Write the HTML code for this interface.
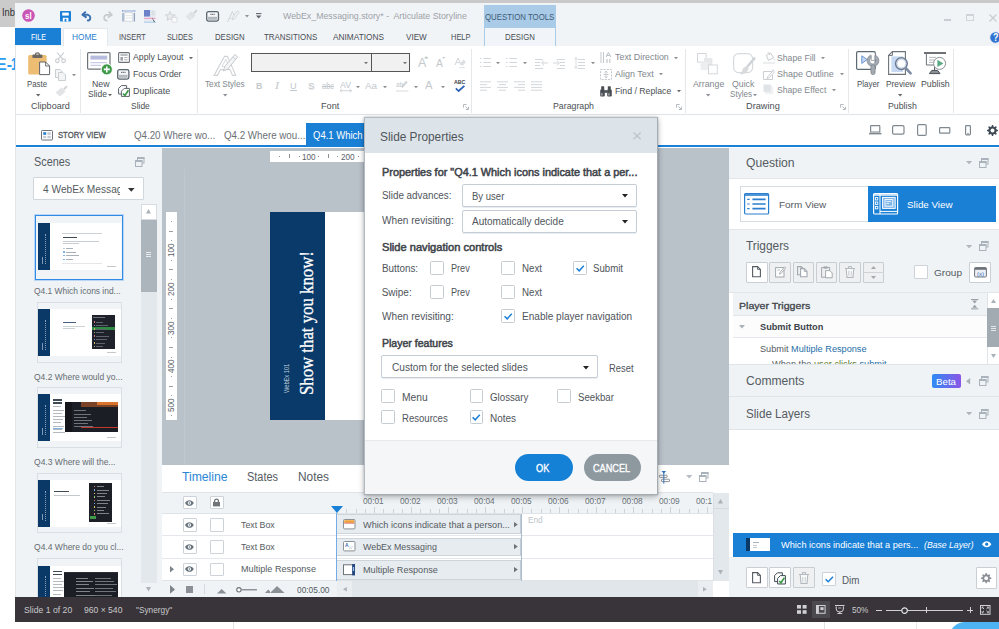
<!DOCTYPE html>
<html><head><meta charset="utf-8"><title>Articulate Storyline</title>
<style>
*{box-sizing:border-box;margin:0;padding:0}
html,body{width:999px;height:629px;overflow:hidden;background:#fff}
body{position:relative;font-family:"Liberation Sans","DejaVu Sans",sans-serif;font-size:10px;color:#4a4f54}
.a{position:absolute}
.t{position:absolute;white-space:nowrap;line-height:1;transform-origin:0 0}
svg{position:absolute;overflow:visible}
</style></head><body>
<!-- backdrop -->
<div class="a" style="left:0px;top:0px;width:999px;height:3px;background:#c9c9c9;"></div>
<div class="a" style="left:0px;top:0px;width:16px;height:27px;background:#cbcbcb;"></div>
<span class="t" style="left:1.50px;top:7.00px;font-size:10.5px;color:#333;transform:scaleX(0.890);">Inb</span>
<span class="t" style="left:-4.00px;top:56.00px;font-size:16.5px;color:#2a9df0;font-weight:bold;transform:scaleX(0.970);">E-</span>
<span class="t" style="left:10.90px;top:56.00px;font-size:16.5px;color:#2a9df0;font-weight:bold;transform:scaleX(0.718);">1</span>
<div class="a" style="left:233px;top:620px;width:1px;height:9px;background:#e3e3e3;"></div>
<div class="a" style="left:824px;top:620px;width:1px;height:9px;background:#e3e3e3;"></div>
<div class="a" style="left:916px;top:620px;width:1px;height:9px;background:#e9e9e9;"></div>
<div class="a" style="left:948.5px;top:621.6px;width:60px;height:20px;background:#4db3f2;border-radius:16px 0 0 0;"></div>
<!-- window -->
<div class="a" style="left:15px;top:3px;width:984px;height:618px;background:#fff;border-left:1px solid #e3e6e9;"></div>
<div class="a" style="left:15px;top:3px;width:984px;height:43px;background:#f1f4f7;"></div>
<svg style="left:22px;top:9.3px;" width="13" height="13" viewBox="0 0 13 13"><circle cx="6.5" cy="6.5" r="6.3" fill="#c955b5"/></svg>
<span class="t" style="left:25.40px;top:12.00px;font-size:9px;color:#fff;font-weight:bold;transform:scaleX(0.878);">sl</span>
<svg style="left:60.2px;top:10.6px;" width="11" height="10.6" viewBox="0 0 11 10.6"><rect x="0" y="0" width="11" height="10.6" rx=".8" fill="#1a80d8"/><rect x="2.2" y="1.6" width="6.6" height="3" fill="#fff"/><rect x="2.8" y="6.8" width="5.6" height="3.8" fill="#fff"/><rect x="4.6" y="7.8" width="1.8" height="2.8" fill="#1a80d8"/></svg>
<svg style="left:81px;top:10.6px;" width="11.4" height="10" viewBox="0 0 11.4 10"><path d="M4.8 0.6L1.4 3.8L5.6 6.6" fill="none" stroke="#3a6fb0" stroke-width="1.9" stroke-linejoin="round"/><path d="M1.8 3.8H7A3.1 3.1 0 0 1 7.6 9.6L6 9.4" fill="none" stroke="#3a6fb0" stroke-width="1.9"/></svg>
<svg style="left:101.8px;top:10.6px;" width="11.4" height="10" viewBox="0 0 11.4 10"><path d="M6.6 0.6L10 3.8L5.8 6.6" fill="none" stroke="#c6cacd" stroke-width="1.7" stroke-linejoin="round"/><path d="M9.6 3.8H4.4A3.1 3.1 0 0 0 3.8 9.6L5.4 9.4" fill="none" stroke="#c6cacd" stroke-width="1.7"/></svg>
<svg style="left:121.5px;top:10px;" width="13.4" height="12" viewBox="0 0 13.4 12"><path d="M0.4 1H13" stroke="#8fa8d6" stroke-width="1"/><path d="M.5 0V2M12.9 0V2" stroke="#8fa8d6" stroke-width=".8"/><rect x="2.6" y="2.8" width="8.2" height="8.4" fill="#fff" stroke="#cfd5db" stroke-width=".9"/><path d="M3.4 5.6H10M3.4 8H10" stroke="#dde2e7" stroke-width=".9"/><path d="M1 3V11.4M12.4 3V11.4" stroke="#8ea2c0" stroke-width="1.3"/></svg>
<svg style="left:144px;top:9.8px;" width="12" height="13" viewBox="0 0 12 13"><rect x="0" y="0" width="6.2" height="6.6" fill="#6b82c8"/><rect x="6.2" y="0" width="5.4" height="6.6" fill="#e6ebf1"/><path d="M6.2 2.2H11.6M6.2 4.4H11.6M9 0V6.6" stroke="#cfd6de" stroke-width=".6"/><path d="M0 8.4H11.6" stroke="#eaa6c9" stroke-width="1.4"/><path d="M0 10.4H8" stroke="#dbe2ea" stroke-width=".8"/><path d="M0 12.2H11.6" stroke="#b7d2ea" stroke-width="1.4"/><path d="M7.6 7L10.4 11L11.4 12.6L9.6 11.6Z" fill="#3e4a54"/></svg>
<svg style="left:164.5px;top:10.6px;" width="12.4" height="11.6" viewBox="0 0 12.4 11.6"><path d="M5 0.5L6.3 3.7L9.6 4L7.1 6.1L7.9 9.4L5 7.6L2.1 9.4L2.9 6.1L0.4 4L3.7 3.7Z" fill="#e9ebed" stroke="#c9cdd1" stroke-width=".9"/><rect x="7" y="6.6" width="5" height="4.6" rx=".6" fill="#fbfbfc" stroke="#d3d7da" stroke-width=".8"/><path d="M8.2 6.6V5.4A1.3 1.3 0 0 1 10.8 5.4V6.6" fill="none" stroke="#d3d7da" stroke-width=".8"/></svg>
<svg style="left:185.3px;top:10.4px;" width="12.6" height="11" viewBox="0 0 12.6 11"><path d="M11.4 0.8L9.2 3" stroke="#d0d4d8" stroke-width="2" stroke-linecap="round"/><path d="M6.4 1.6L10.6 5.4L5 10.6L0.6 6.4Z" fill="#dfe2e5"/><path d="M3 4.6L7.4 8.6" stroke="#eef0f2" stroke-width=".8"/></svg>
<svg style="left:205.8px;top:10.7px;" width="13.2" height="10.8" viewBox="0 0 13.2 10.8"><rect x=".7" y=".7" width="11.8" height="9.4" rx="1.8" fill="#f4f6f7" stroke="#5a666e" stroke-width="1.3"/><rect x="2" y="5.8" width="9.2" height="3" fill="#b4babf"/><path d="M4.4 3.4H8.8" stroke="#6d7379" stroke-width="1.2" stroke-dasharray="1.2 .5"/></svg>
<svg style="left:226.7px;top:9.8px;" width="12.4" height="12.4" viewBox="0 0 12.4 12.4"><path d="M0.5 12L5.4 1.5L8.4 8.4" fill="none" stroke="#cfd3d7" stroke-width="1"/><path d="M2.6 8.4H7" stroke="#d5d9dc" stroke-width=".9"/><path d="M10.6 0.6L5.8 7.2L5.2 10L7.6 8.6L12.2 2.4Z" fill="#f1f3f5" stroke="#cfd3d7" stroke-width=".9"/></svg>
<svg style="left:245.3px;top:15.2px;" width="4" height="2.4" viewBox="0 0 4 2.4"><path d="M0 0H4L2.0 2.4Z" fill="#8a9096"/></svg>
<svg style="left:256.2px;top:13.2px;" width="5.4" height="5.6" viewBox="0 0 5.4 5.6"><path d="M0 .6H5.4" stroke="#5f656b" stroke-width="1.1"/><path d="M0 2.6H5.4L2.7 5.4Z" fill="#5f656b"/></svg>
<span class="t" style="left:282.50px;top:11.00px;font-size:9.8px;color:#9da2a7;transform:scaleX(0.899);">WebEx_Messaging.story* -&nbsp; Articulate Storyline</span>
<div class="a" style="left:944px;top:19px;width:7px;height:1.5px;background:#c9cdd1;"></div>
<div class="a" style="left:966px;top:13.5px;width:8px;height:7.5px;border:1px solid #d0d4d8;border-top-width:2px;"></div>
<svg style="left:989px;top:13.5px;" width="8" height="8" viewBox="0 0 8 8"><path d="M0.5 0.5L7.5 7.5M7.5 0.5L0.5 7.5" stroke="#c9cdd1" stroke-width="1.3"/></svg>
<svg style="left:989px;top:30.5px;" width="13" height="13" viewBox="0 0 13 13"><circle cx="6.5" cy="6.5" r="6.3" fill="#dfe8f5"/><circle cx="6.5" cy="6.5" r="5.2" fill="#2f72cf"/></svg>
<span class="t" style="left:993.20px;top:33.00px;font-size:10px;color:#fff;font-weight:bold;transform:scaleX(0.900);">?</span>
<div class="a" style="left:15px;top:28.2px;width:45.9px;height:17.2px;background:#1a80d6;"></div>
<span class="t" style="left:30.50px;top:33.00px;font-size:9.2px;color:#fff;transform:scaleX(0.773);">FILE</span>
<div class="a" style="left:63px;top:28px;width:44.5px;height:18px;background:#fff;border:1px solid #e3e8ec;border-bottom:none;"></div>
<span class="t" style="left:72.30px;top:33.00px;font-size:9.2px;color:#2a7fd0;transform:scaleX(0.900);">HOME</span>
<span class="t" style="left:118.50px;top:33.00px;font-size:9.2px;color:#4a4f54;transform:scaleX(0.799);">INSERT</span>
<span class="t" style="left:166.50px;top:33.00px;font-size:9.2px;color:#4a4f54;transform:scaleX(0.789);">SLIDES</span>
<span class="t" style="left:215.30px;top:33.00px;font-size:9.2px;color:#4a4f54;transform:scaleX(0.843);">DESIGN</span>
<span class="t" style="left:263.80px;top:33.00px;font-size:9.2px;color:#4a4f54;transform:scaleX(0.861);">TRANSITIONS</span>
<span class="t" style="left:333.30px;top:33.00px;font-size:9.2px;color:#4a4f54;transform:scaleX(0.903);">ANIMATIONS</span>
<span class="t" style="left:405.50px;top:33.00px;font-size:9.2px;color:#4a4f54;transform:scaleX(0.886);">VIEW</span>
<span class="t" style="left:450.50px;top:33.00px;font-size:9.2px;color:#4a4f54;transform:scaleX(0.812);">HELP</span>
<div class="a" style="left:483.75px;top:5px;width:72.5px;height:23px;background:#a9cbe8;"></div>
<span class="t" style="left:485.00px;top:13.00px;font-size:9.2px;color:#3e5a74;transform:scaleX(0.852);">QUESTION TOOLS</span>
<div class="a" style="left:483.75px;top:28px;width:72.5px;height:17.5px;background:#f1f5f9;border:1px solid #a9cbe8;border-top:none;border-bottom:none;"></div>
<span class="t" style="left:504.50px;top:33.00px;font-size:9.2px;color:#4a4f54;transform:scaleX(0.851);">DESIGN</span>
<!-- ribbon -->
<div class="a" style="left:16px;top:46px;width:983px;height:68.5px;background:#fff;border-bottom:1px solid #dfe4e8;"></div>
<div class="a" style="left:80px;top:49px;width:1px;height:63.5px;background:#e4e8eb;"></div>
<div class="a" style="left:196.5px;top:49px;width:1px;height:63.5px;background:#e4e8eb;"></div>
<div class="a" style="left:470.5px;top:49px;width:1px;height:63.5px;background:#e4e8eb;"></div>
<div class="a" style="left:685px;top:49px;width:1px;height:63.5px;background:#e4e8eb;"></div>
<div class="a" style="left:848px;top:49px;width:1px;height:63.5px;background:#e4e8eb;"></div>
<div class="a" style="left:953px;top:49px;width:1px;height:63.5px;background:#e4e8eb;"></div>
<svg style="left:27.8px;top:52px;" width="22" height="23" viewBox="0 0 22 23"><rect x="0.2" y="3" width="18.4" height="19.6" rx="1.5" fill="#ecbd73"/><rect x="4.4" y="2.6" width="10" height="3.4" rx=".8" fill="#6b6762"/><path d="M7.4 3V2.4A2 1.5 0 0 1 11.4 2.4V3" fill="none" stroke="#6b6762" stroke-width="1.2"/><path d="M11.6 10H17.6L21.6 14V22.6H11.6Z" fill="#fff" stroke="#5f656b" stroke-width="1"/><path d="M17.6 10V14H21.6" fill="none" stroke="#5f656b" stroke-width=".9"/></svg>
<span class="t" style="left:26.80px;top:80.00px;font-size:9.3px;color:#4a4f54;transform:scaleX(0.841);">Paste</span>
<svg style="left:35.5px;top:94px;" width="4.4" height="2.4" viewBox="0 0 4.4 2.4"><path d="M0 0H4.4L2.2 2.4Z" fill="#666"/></svg>
<svg style="left:55px;top:52px;" width="11" height="11" viewBox="0 0 11 11"><path d="M2 0.5L8 7.4M9 0.5L3 7.4" stroke="#c5cacf" stroke-width="1.1" fill="none"/><circle cx="2.4" cy="8.8" r="1.8" fill="none" stroke="#c5cacf" stroke-width="1.1"/><circle cx="8.6" cy="8.8" r="1.8" fill="none" stroke="#c5cacf" stroke-width="1.1"/></svg>
<svg style="left:55px;top:69px;" width="12" height="12" viewBox="0 0 12 12"><path d="M0.5 0.5H5L7.5 3V8.5H0.5Z" fill="#f3f4f5" stroke="#c9ced2" stroke-width="1"/><path d="M3.5 3.5H8L10.5 6V11.5H3.5Z" fill="#f3f4f5" stroke="#c9ced2" stroke-width="1"/></svg>
<svg style="left:72px;top:74px;" width="4" height="2.2" viewBox="0 0 4 2.2"><path d="M0 0H4L2.0 2.2Z" fill="#8a9096"/></svg>
<svg style="left:54.6px;top:85.6px;" width="12.6" height="11" viewBox="0 0 12.6 11"><path d="M11.4 0.8L9.2 3" stroke="#d3d7da" stroke-width="2" stroke-linecap="round"/><path d="M6.4 1.6L10.6 5.4L5 10.6L0.6 6.4Z" fill="#e2e5e8"/></svg>
<span class="t" style="left:30.50px;top:102.00px;font-size:9.3px;color:#4a4f54;transform:scaleX(0.975);">Clipboard</span>
<svg style="left:87px;top:52px;" width="24" height="24" viewBox="0 0 24 24"><rect x="0.6" y="0.6" width="22.4" height="16.6" rx="1" fill="#fff" stroke="#6d7379" stroke-width="1.2"/><rect x="3.4" y="3.6" width="16.8" height="4" fill="#b7bcdf"/><path d="M3.4 10.6H20M3.4 13.4H14" stroke="#c7cbe6" stroke-width="1.2"/><circle cx="19.8" cy="17.4" r="5.6" fill="#3f9b4a" stroke="#fff" stroke-width="1"/><path d="M19.8 14.4V20.4M16.8 17.4H22.8" stroke="#fff" stroke-width="1.6"/></svg>
<span class="t" style="left:91.50px;top:80.00px;font-size:9.3px;color:#4a4f54;transform:scaleX(0.940);">New</span>
<span class="t" style="left:88.00px;top:90.00px;font-size:9.3px;color:#4a4f54;transform:scaleX(0.918);">Slide</span>
<svg style="left:108.3px;top:94.3px;" width="4" height="2.2" viewBox="0 0 4 2.2"><path d="M0 0H4L2.0 2.2Z" fill="#666"/></svg>
<svg style="left:117.5px;top:52px;" width="12" height="11" viewBox="0 0 12 11"><rect x=".6" y=".6" width="10.8" height="9.8" rx="1" fill="#fff" stroke="#6d7379" stroke-width="1.1"/><path d="M2.4 3H9.6" stroke="#8d949b" stroke-width="1.2"/><rect x="2.4" y="5" width="2.6" height="3.6" fill="#9aa1a8"/><path d="M6.2 5.6H9.6M6.2 7.8H9.6" stroke="#aab0b6" stroke-width="1"/></svg>
<span class="t" style="left:132.50px;top:53.00px;font-size:9.3px;color:#4a4f54;transform:scaleX(0.939);">Apply Layout</span>
<svg style="left:188.5px;top:56.5px;" width="4" height="2.2" viewBox="0 0 4 2.2"><path d="M0 0H4L2.0 2.2Z" fill="#666"/></svg>
<svg style="left:117.4px;top:68.6px;" width="12.6" height="11" viewBox="0 0 12.6 11"><rect x=".7" y=".7" width="11.2" height="9.4" rx="1.8" fill="#f4f6f7" stroke="#5a666e" stroke-width="1.3"/><rect x="2" y="5.8" width="8.6" height="3" fill="#b4babf"/><path d="M4 3.4H8.6" stroke="#6d7379" stroke-width="1.2" stroke-dasharray="1.2 .5"/></svg>
<span class="t" style="left:132.50px;top:70.00px;font-size:9.3px;color:#4a4f54;transform:scaleX(0.939);">Focus Order</span>
<svg style="left:117.5px;top:85px;" width="12" height="12" viewBox="0 0 12 12"><path d="M0.6 3.4L3.4 0.6H8.6V9H0.6Z" fill="#fff" stroke="#5c6268" stroke-width="1"/><path d="M3.4 6.2L6.2 3.4H11.4V11.4H3.4Z" fill="#fff" stroke="#5c6268" stroke-width="1"/><path d="M5 8.6L7 10.4L10.4 5.2" fill="none" stroke="#3f9b4a" stroke-width="1.8"/></svg>
<span class="t" style="left:132.50px;top:87.00px;font-size:9.3px;color:#4a4f54;transform:scaleX(0.962);">Duplicate</span>
<span class="t" style="left:130.50px;top:102.00px;font-size:9.3px;color:#4a4f54;transform:scaleX(0.909);">Slide</span>
<svg style="left:213px;top:53.6px;" width="25" height="22" viewBox="0 0 25 22"><path d="M1 21.4L11.4 2.4H14.4L22.8 21.4H19.6L17 15.6H7.4L4.4 21.4Z" fill="#fff" stroke="#cdd1d5" stroke-width="1.1" stroke-linejoin="round"/><path d="M9 12.6L12.8 5.2L15.8 12.6Z" fill="#fff" stroke="#d3d7da" stroke-width=".9"/><path d="M22 0.4L11.8 12.4L10.4 17L14.8 15L24.6 3Z" fill="#f3f4f6" stroke="#c6cbcf" stroke-width="1" stroke-linejoin="round"/><path d="M19.8 3L22.4 5.4" stroke="#c6cbcf" stroke-width=".9"/></svg>
<span class="t" style="left:205.00px;top:80.00px;font-size:9.3px;color:#82888e;transform:scaleX(0.879);">Text Styles</span>
<svg style="left:223px;top:94px;" width="4.4" height="2.4" viewBox="0 0 4.4 2.4"><path d="M0 0H4.4L2.2 2.4Z" fill="#8a9096"/></svg>
<div class="a" style="left:250.5px;top:53px;width:121.5px;height:19px;background:#f1f1f1;border:1px solid #555;"></div>
<div class="a" style="left:371px;top:53px;width:38.5px;height:19px;background:#f1f1f1;border:1px solid #555;"></div>
<svg style="left:364px;top:61.5px;" width="4" height="2.2" viewBox="0 0 4 2.2"><path d="M0 0H4L2.0 2.2Z" fill="#777"/></svg>
<svg style="left:402.5px;top:61.5px;" width="4" height="2.2" viewBox="0 0 4 2.2"><path d="M0 0H4L2.0 2.2Z" fill="#777"/></svg>
<span class="t" style="left:418.00px;top:57.00px;font-size:12px;color:#c3c8cc;transform:scaleX(1.035);">A</span>
<svg style="left:424.5px;top:56.6px;" width="3.4" height="1.8" viewBox="0 0 3.4 1.8"><path d="M0 0H3.4L1.7 1.8Z" fill="#c3c8cc"/></svg>
<svg style="left:424.2px;top:56px;" width="4" height="2.4" viewBox="0 0 4 2.4"><path d="M0 2.4L2 0L4 2.4Z" fill="#c3c8cc"/></svg>
<span class="t" style="left:435.50px;top:59.00px;font-size:10.3px;color:#c3c8cc;transform:scaleX(1.018);">A</span>
<svg style="left:441.5px;top:57.2px;" width="3.4" height="1.8" viewBox="0 0 3.4 1.8"><path d="M0 0H3.4L1.7 1.8Z" fill="#c3c8cc"/></svg>
<svg style="left:453.5px;top:56.5px;" width="12" height="11" viewBox="0 0 12 11"><path d="M1 8L4 1L7 8M2.2 5.6H5.8" fill="none" stroke="#d3d7da" stroke-width="1"/><path d="M6 6.4L9.4 2.6L12 5L8.6 9Z" fill="#dde0e3"/><path d="M5 10.5H11" stroke="#e3e6e8" stroke-width="1"/></svg>
<span class="t" style="left:256.00px;top:81.00px;font-size:9.6px;color:#c3c8cc;font-weight:bold;transform:scaleX(0.908);">B</span>
<span class="t" style="left:274.50px;top:81.00px;font-size:9.6px;color:#c3c8cc;font-style:italic;font-family:'Liberation Serif',serif;transform:scaleX(1.249);">I</span>
<span class="t" style="left:290.30px;top:81.00px;font-size:9.6px;color:#c3c8cc;transform:scaleX(0.951);">U</span>
<div class="a" style="left:290px;top:90.3px;width:7.2px;height:1px;background:#c3c8cc;"></div>
<span class="t" style="left:308.00px;top:81.00px;font-size:9.6px;color:#c3c8cc;text-shadow:1px 1px 0 #e2e5e7;transform:scaleX(0.983);">S</span>
<span class="t" style="left:322.00px;top:82.00px;font-size:8.3px;color:#c3c8cc;transform:scaleX(0.896);">abc</span>
<div class="a" style="left:322px;top:86px;width:12px;height:0.8px;background:#c3c8cc;"></div>
<span class="t" style="left:339.80px;top:81.00px;font-size:8.6px;color:#c3c8cc;transform:scaleX(1.016);">AV</span>
<svg style="left:339.5px;top:89.3px;" width="11.5" height="3.4" viewBox="0 0 11.5 3.4"><path d="M0 1.7H11.5M1.8 0L0 1.7L1.8 3.4M9.7 0L11.5 1.7L9.7 3.4" fill="none" stroke="#c3c8cc" stroke-width=".8"/></svg>
<svg style="left:356.3px;top:85.6px;" width="4" height="2.2" viewBox="0 0 4 2.2"><path d="M0 0H4L2.0 2.2Z" fill="#8a9096"/></svg>
<span class="t" style="left:365.00px;top:81.00px;font-size:9.6px;color:#c3c8cc;transform:scaleX(1.021);">Aa</span>
<svg style="left:383px;top:85.6px;" width="4" height="2.2" viewBox="0 0 4 2.2"><path d="M0 0H4L2.0 2.2Z" fill="#8a9096"/></svg>
<svg style="left:395.5px;top:80.5px;" width="12.5" height="11" viewBox="0 0 12.5 11"><path d="M11 0.5L5.6 6.2" stroke="#d0d4d8" stroke-width="2"/><path d="M0 10H12.5" stroke="#e6e8ea" stroke-width="1.6"/></svg>
<span class="t" style="left:395.70px;top:82.00px;font-size:6.6px;color:#c3c8cc;transform:scaleX(0.953);">ab</span>
<svg style="left:413.6px;top:85.6px;" width="4" height="2.2" viewBox="0 0 4 2.2"><path d="M0 0H4L2.0 2.2Z" fill="#8a9096"/></svg>
<span class="t" style="left:425.00px;top:80.00px;font-size:10.6px;color:#c3c8cc;transform:scaleX(1.060);">A</span>
<svg style="left:440.6px;top:85.6px;" width="4" height="2.2" viewBox="0 0 4 2.2"><path d="M0 0H4L2.0 2.2Z" fill="#8a9096"/></svg>
<span class="t" style="left:453.60px;top:80.00px;font-size:5.4px;color:#3d4247;font-weight:bold;transform:scaleX(0.975);">ABC</span>
<svg style="left:455px;top:85px;" width="10" height="7" viewBox="0 0 10 7"><path d="M0.8 3.4L3.6 6L9.4 0.8" fill="none" stroke="#2a62b5" stroke-width="1.7"/></svg>
<span class="t" style="left:320.50px;top:102.00px;font-size:9.3px;color:#4a4f54;transform:scaleX(0.983);">Font</span>
<svg style="left:462.5px;top:104px;" width="6" height="6" viewBox="0 0 6 6"><path d="M.5 3.6V.5H3.6" fill="none" stroke="#b4babf" stroke-width="1"/><path d="M2.4 2.4L5.2 5.2M5.5 2.8V5.5H2.8" fill="none" stroke="#b4babf" stroke-width="1"/></svg>
<svg style="left:479.5px;top:57px;" width="14" height="12" viewBox="0 0 14 12"><path d="M0 1.5H1.4" stroke="#d3d7db" stroke-width="1"/><path d="M3.4 1.5H11" stroke="#d3d7db" stroke-width="1"/><path d="M0 5.5H1.4" stroke="#d3d7db" stroke-width="1"/><path d="M3.4 5.5H11" stroke="#d3d7db" stroke-width="1"/><path d="M0 9.5H1.4" stroke="#d3d7db" stroke-width="1"/><path d="M3.4 9.5H11" stroke="#d3d7db" stroke-width="1"/></svg>
<svg style="left:496.3px;top:61.5px;" width="4" height="2.2" viewBox="0 0 4 2.2"><path d="M0 0H4L2.0 2.2Z" fill="#8a9096"/></svg>
<svg style="left:506px;top:57px;" width="14" height="12" viewBox="0 0 14 12"><path d="M0 1.5H1.4" stroke="#d3d7db" stroke-width="1"/><path d="M3.4 1.5H11" stroke="#d3d7db" stroke-width="1"/><path d="M0 5.5H1.4" stroke="#d3d7db" stroke-width="1"/><path d="M3.4 5.5H11" stroke="#d3d7db" stroke-width="1"/><path d="M0 9.5H1.4" stroke="#d3d7db" stroke-width="1"/><path d="M3.4 9.5H11" stroke="#d3d7db" stroke-width="1"/></svg>
<svg style="left:522.7px;top:61.5px;" width="4" height="2.2" viewBox="0 0 4 2.2"><path d="M0 0H4L2.0 2.2Z" fill="#8a9096"/></svg>
<svg style="left:535px;top:57.5px;" width="14" height="12" viewBox="0 0 14 12"><path d="M0 1.5H8" stroke="#d3d7db" stroke-width="1"/><path d="M0 4.5H5" stroke="#d3d7db" stroke-width="1"/><path d="M0 7.5H5" stroke="#d3d7db" stroke-width="1"/><path d="M0 10.5H8" stroke="#d3d7db" stroke-width="1"/></svg>
<svg style="left:541px;top:60px;" width="7" height="6" viewBox="0 0 7 6"><path d="M7 3H1M3 0.6L0.6 3L3 5.4" fill="none" stroke="#d3d7db" stroke-width="1"/></svg>
<svg style="left:557px;top:57.5px;" width="14" height="12" viewBox="0 0 14 12"><path d="M0 1.5H8" stroke="#d3d7db" stroke-width="1"/><path d="M3 4.5H8" stroke="#d3d7db" stroke-width="1"/><path d="M3 7.5H8" stroke="#d3d7db" stroke-width="1"/><path d="M0 10.5H8" stroke="#d3d7db" stroke-width="1"/></svg>
<svg style="left:552.5px;top:60px;" width="7" height="6" viewBox="0 0 7 6"><path d="M0 3H6M4 0.6L6.4 3L4 5.4" fill="none" stroke="#d3d7db" stroke-width="1"/></svg>
<svg style="left:578px;top:57.5px;" width="14" height="12" viewBox="0 0 14 12"><path d="M0 1.5H7" stroke="#d3d7db" stroke-width="1"/><path d="M0 4.5H7" stroke="#d3d7db" stroke-width="1"/><path d="M0 7.5H7" stroke="#d3d7db" stroke-width="1"/><path d="M0 10.5H7" stroke="#d3d7db" stroke-width="1"/></svg>
<svg style="left:573.5px;top:57px;" width="4" height="12" viewBox="0 0 4 12"><path d="M2 0.6V11.4M0.4 2.4L2 0.6L3.6 2.4M0.4 9.6L2 11.4L3.6 9.6" fill="none" stroke="#d3d7db" stroke-width=".9"/></svg>
<svg style="left:590.6px;top:61.5px;" width="4" height="2.2" viewBox="0 0 4 2.2"><path d="M0 0H4L2.0 2.2Z" fill="#8a9096"/></svg>
<svg style="left:479.5px;top:81px;" width="14" height="12" viewBox="0 0 14 12"><path d="M0 0.8H11" stroke="#d3d7db" stroke-width="1"/><path d="M0 3.6H7" stroke="#d3d7db" stroke-width="1"/><path d="M0 6.4H11" stroke="#d3d7db" stroke-width="1"/><path d="M0 9.2H7" stroke="#d3d7db" stroke-width="1"/></svg>
<svg style="left:496.5px;top:81px;" width="14" height="12" viewBox="0 0 14 12"><path d="M0 0.8H11" stroke="#d3d7db" stroke-width="1"/><path d="M2 3.6H9" stroke="#d3d7db" stroke-width="1"/><path d="M0 6.4H11" stroke="#d3d7db" stroke-width="1"/><path d="M2 9.2H9" stroke="#d3d7db" stroke-width="1"/></svg>
<svg style="left:513.8px;top:81px;" width="14" height="12" viewBox="0 0 14 12"><path d="M0 0.8H11" stroke="#d3d7db" stroke-width="1"/><path d="M4 3.6H11" stroke="#d3d7db" stroke-width="1"/><path d="M0 6.4H11" stroke="#d3d7db" stroke-width="1"/><path d="M4 9.2H11" stroke="#d3d7db" stroke-width="1"/></svg>
<svg style="left:530.8px;top:81px;" width="14" height="12" viewBox="0 0 14 12"><path d="M0 0.8H11" stroke="#d3d7db" stroke-width="1"/><path d="M0 3.6H11" stroke="#d3d7db" stroke-width="1"/><path d="M0 6.4H11" stroke="#d3d7db" stroke-width="1"/><path d="M0 9.2H11" stroke="#d3d7db" stroke-width="1"/></svg>
<svg style="left:600px;top:52px;" width="12" height="11.5" viewBox="0 0 12 11.5"><path d="M1 0V11M3.5 0V11" stroke="#c3c8cc" stroke-width="1"/><path d="M6 5L8.4 0.4L10.8 5M6.8 3.4H10" fill="none" stroke="#b3b8bd" stroke-width=".9"/><path d="M7 7V11M9.8 7V11" stroke="#c3c8cc" stroke-width="1.2"/></svg>
<span class="t" style="left:615.00px;top:53.00px;font-size:9.3px;color:#82888e;transform:scaleX(0.955);">Text Direction</span>
<svg style="left:674.3px;top:56.5px;" width="4" height="2.2" viewBox="0 0 4 2.2"><path d="M0 0H4L2.0 2.2Z" fill="#8a9096"/></svg>
<svg style="left:600px;top:69px;" width="12" height="11" viewBox="0 0 12 11"><rect x=".5" y=".5" width="11" height="10" fill="none" stroke="#c3c8cc" stroke-width="1" stroke-dasharray="2 1.2"/><path d="M6 2V9M4.4 3.6L6 2L7.6 3.6M4.4 7.4L6 9L7.6 7.4M3.4 5.5H8.6" fill="none" stroke="#c3c8cc" stroke-width=".9"/></svg>
<span class="t" style="left:615.00px;top:70.00px;font-size:9.3px;color:#82888e;transform:scaleX(0.967);">Align Text</span>
<svg style="left:659px;top:73.4px;" width="4" height="2.2" viewBox="0 0 4 2.2"><path d="M0 0H4L2.0 2.2Z" fill="#8a9096"/></svg>
<svg style="left:600px;top:85.5px;" width="12" height="11" viewBox="0 0 12 11"><rect x="0.2" y="3.6" width="4.6" height="7" rx="1" fill="#4a4f54"/><rect x="7.2" y="3.6" width="4.6" height="7" rx="1" fill="#4a4f54"/><rect x="1.2" y="0.2" width="3" height="4.2" rx=".6" fill="#4a4f54"/><rect x="7.8" y="0.2" width="3" height="4.2" rx=".6" fill="#4a4f54"/><rect x="4.4" y="4.2" width="3.2" height="2.6" fill="#4a4f54"/><rect x="1.2" y="7.2" width="1.4" height="2.4" fill="#fff" opacity=".55"/><rect x="8.2" y="7.2" width="1.4" height="2.4" fill="#fff" opacity=".55"/></svg>
<span class="t" style="left:615.00px;top:87.00px;font-size:9.3px;color:#4a4f54;transform:scaleX(0.939);">Find / Replace</span>
<svg style="left:677px;top:90.4px;" width="4" height="2.2" viewBox="0 0 4 2.2"><path d="M0 0H4L2.0 2.2Z" fill="#666"/></svg>
<span class="t" style="left:553.30px;top:102.00px;font-size:9.3px;color:#4a4f54;transform:scaleX(0.944);">Paragraph</span>
<svg style="left:676px;top:104px;" width="6" height="6" viewBox="0 0 6 6"><path d="M.5 3.6V.5H3.6" fill="none" stroke="#b4babf" stroke-width="1"/><path d="M2.4 2.4L5.2 5.2M5.5 2.8V5.5H2.8" fill="none" stroke="#b4babf" stroke-width="1"/></svg>
<svg style="left:697px;top:52.5px;" width="21" height="21.5" viewBox="0 0 21 21.5"><rect x=".5" y=".5" width="8.6" height="8.6" fill="#fff" stroke="#d3d7db" stroke-width="1"/><rect x="7" y="5" width="8.4" height="8.4" fill="#e6e8ea"/><rect x="3.6" y="9" width="8" height="8" fill="#eceef0"/><rect x="11.5" y="12" width="8.8" height="8.8" fill="#fff" stroke="#d3d7db" stroke-width="1"/></svg>
<span class="t" style="left:693.00px;top:80.00px;font-size:9.3px;color:#82888e;transform:scaleX(0.946);">Arrange</span>
<svg style="left:706px;top:94px;" width="4.4" height="2.4" viewBox="0 0 4.4 2.4"><path d="M0 0H4.4L2.2 2.4Z" fill="#8a9096"/></svg>
<svg style="left:732.5px;top:52.5px;" width="23" height="23" viewBox="0 0 23 23"><rect x=".6" y=".6" width="19" height="19" rx="5" fill="#fff" stroke="#d8dbde" stroke-width="1.2"/><path d="M22 4.6L14 14" stroke="#cfd3d7" stroke-width="2.4"/><path d="M13.6 13L11 14.6C9 16 9.6 19 7 21.4C11 21.8 14.6 19.6 15.8 15Z" fill="#d8dbde"/></svg>
<span class="t" style="left:732.00px;top:80.00px;font-size:9.3px;color:#82888e;transform:scaleX(0.938);">Quick</span>
<span class="t" style="left:730.00px;top:90.00px;font-size:9.3px;color:#82888e;transform:scaleX(0.869);">Styles</span>
<svg style="left:753.3px;top:94.3px;" width="4" height="2.2" viewBox="0 0 4 2.2"><path d="M0 0H4L2.0 2.2Z" fill="#8a9096"/></svg>
<svg style="left:762.5px;top:52px;" width="12.5" height="12" viewBox="0 0 12.5 12"><path d="M3.4 3.2L7.6 1.2L10.6 5.6L5.4 8.4Z" fill="#fff" stroke="#c6cbcf" stroke-width="1"/><path d="M4.6 0.6C6 0 6.8 1.4 6.4 2.8" fill="none" stroke="#c6cbcf" stroke-width=".9"/><path d="M11 6.2C11.8 7.4 12 8 11.4 8.6C10.8 8.2 10.6 7.2 11 6.2Z" fill="#c6cbcf"/><rect x="0" y="9.8" width="12" height="2.2" fill="#eceef0"/></svg>
<span class="t" style="left:777.00px;top:54.00px;font-size:9.3px;color:#82888e;transform:scaleX(0.931);">Shape Fill</span>
<svg style="left:821px;top:57px;" width="4" height="2.2" viewBox="0 0 4 2.2"><path d="M0 0H4L2.0 2.2Z" fill="#8a9096"/></svg>
<svg style="left:762.5px;top:68.5px;" width="12.5" height="11" viewBox="0 0 12.5 11"><path d="M0.5 2.5H8.5L11 0.6" fill="none" stroke="#c6cbcf" stroke-width=".9"/><path d="M0.5 2.5V10.5H9.5V6" fill="none" stroke="#c6cbcf" stroke-width=".9"/><path d="M10.2 1.6L4.8 7.6L4 9.6L6 8.8L11.6 2.8Z" fill="#fff" stroke="#c6cbcf" stroke-width=".9"/></svg>
<span class="t" style="left:777.00px;top:70.00px;font-size:9.3px;color:#82888e;transform:scaleX(0.964);">Shape Outline</span>
<svg style="left:840px;top:73px;" width="4" height="2.2" viewBox="0 0 4 2.2"><path d="M0 0H4L2.0 2.2Z" fill="#8a9096"/></svg>
<svg style="left:762.5px;top:83.5px;" width="12.5" height="11" viewBox="0 0 12.5 11"><rect x="2.2" y="2.2" width="8" height="8" fill="#f0f1f3"/><rect x="0.5" y="0.5" width="7.4" height="7.4" fill="#e1e4e7"/></svg>
<span class="t" style="left:777.00px;top:86.00px;font-size:9.3px;color:#82888e;transform:scaleX(0.929);">Shape Effect</span>
<svg style="left:831.8px;top:89px;" width="4" height="2.2" viewBox="0 0 4 2.2"><path d="M0 0H4L2.0 2.2Z" fill="#8a9096"/></svg>
<span class="t" style="left:745.50px;top:102.00px;font-size:9.3px;color:#4a4f54;transform:scaleX(0.991);">Drawing</span>
<svg style="left:839.5px;top:104px;" width="6" height="6" viewBox="0 0 6 6"><path d="M.5 3.6V.5H3.6" fill="none" stroke="#b4babf" stroke-width="1"/><path d="M2.4 2.4L5.2 5.2M5.5 2.8V5.5H2.8" fill="none" stroke="#b4babf" stroke-width="1"/></svg>
<svg style="left:856.3px;top:51px;" width="24" height="24" viewBox="0 0 24 24"><rect x=".6" y=".6" width="18.6" height="17.8" rx="1.2" fill="#fff" stroke="#5e6a72" stroke-width="1.2"/><path d="M5.8 4.8V12.4L11.2 8.6Z" fill="#c5d8f2" stroke="#6a93d0" stroke-width="1"/><circle cx="17" cy="9.6" r="4.4" fill="none" stroke="#a3aab1" stroke-width="3"/><circle cx="17" cy="9.6" r="5.9" fill="none" stroke="#7a838b" stroke-width=".7"/><rect x="15.2" y="2.4" width="3.6" height="7.6" fill="#fff"/><path d="M15.2 4.4V9.4H18.8V4.4" fill="none" stroke="#7a838b" stroke-width=".7"/><rect x="14.9" y="13.6" width="4.2" height="10" rx="2" fill="#a3aab1" stroke="#7a838b" stroke-width=".7"/></svg>
<span class="t" style="left:857.00px;top:80.00px;font-size:9.3px;color:#4a4f54;transform:scaleX(0.854);">Player</span>
<svg style="left:887.5px;top:51px;" width="24.5" height="24.5" viewBox="0 0 24.5 24.5"><path d="M0.6 4.4L4.4 0.6H17.4V23.4H0.6Z" fill="#fff" stroke="#6d7379" stroke-width="1.1"/><path d="M4.4 0.6V4.4H0.6" fill="none" stroke="#6d7379" stroke-width="1"/><rect x="3.4" y="5.4" width="11.6" height="15.6" fill="#c7d9f3"/><circle cx="13.4" cy="12.6" r="5.8" fill="#fff" stroke="#6a7b92" stroke-width="1.6"/><circle cx="13.4" cy="12.6" r="4.4" fill="none" stroke="#c0cde0" stroke-width="1"/><path d="M17.8 17.2L22.6 22.4" stroke="#7d8ca2" stroke-width="2.6" stroke-linecap="round"/></svg>
<span class="t" style="left:885.50px;top:80.00px;font-size:9.3px;color:#4a4f54;transform:scaleX(0.892);">Preview</span>
<svg style="left:897.8px;top:94px;" width="4.4" height="2.4" viewBox="0 0 4.4 2.4"><path d="M0 0H4.4L2.2 2.4Z" fill="#666"/></svg>
<svg style="left:924px;top:52px;" width="23" height="23" viewBox="0 0 23 23"><path d="M0 1H22" stroke="#4a4f54" stroke-width="1.6"/><path d="M2.4 2V13H13" fill="none" stroke="#6d7379" stroke-width="1"/><path d="M5 5.4H12M5 8H10.6M5 10.4H9" stroke="#aab0b6" stroke-width=".9"/><path d="M10.6 13V18M5.4 21.6H16L13.6 18.4H7.8Z" fill="#8a9096" stroke="#4a4f54" stroke-width="1"/><circle cx="15.6" cy="11.4" r="6" fill="#fff" stroke="#8a9096" stroke-width="1"/><path d="M13.4 7.8V15L19.4 11.4Z" fill="#5aa886"/></svg>
<span class="t" style="left:920.50px;top:80.00px;font-size:9.3px;color:#4a4f54;transform:scaleX(0.938);">Publish</span>
<span class="t" style="left:887.50px;top:102.00px;font-size:9.3px;color:#4a4f54;transform:scaleX(0.944);">Publish</span>
<!-- doc tabs -->
<svg style="left:40.8px;top:129.5px;" width="12" height="10.5" viewBox="0 0 12 10.5"><rect x=".5" y=".5" width="11" height="9.5" rx=".8" fill="#fff" stroke="#6d7379" stroke-width="1"/><rect x="2.2" y="2.2" width="3" height="2.6" fill="#2a7fd0"/><rect x="6.4" y="2.2" width="3.4" height="2.6" fill="#c5cbd1"/><rect x="2.2" y="5.8" width="3" height="2.4" fill="#c5cbd1"/><rect x="6.4" y="5.8" width="3.4" height="2.4" fill="#c5cbd1"/></svg>
<span class="t" style="left:58.00px;top:131.00px;font-size:8.8px;color:#4f555b;-webkit-text-stroke:.3px #4f555b;transform:scaleX(0.873);">STORY VIEW</span>
<span class="t" style="left:134.30px;top:131.00px;font-size:10.2px;color:#6a7076;transform:scaleX(0.956);">Q4.20 Where wo...</span>
<span class="t" style="left:223.60px;top:131.00px;font-size:10.2px;color:#6a7076;transform:scaleX(0.958);">Q4.2 Where wou...</span>
<div class="a" style="left:305.6px;top:123px;width:70px;height:23px;background:#1a80d6;"></div>
<span class="t" style="left:313.40px;top:131.00px;font-size:10.2px;color:#fff;transform:scaleX(0.932);">Q4.1 Which</span>
<div class="a" style="left:16px;top:145.4px;width:983px;height:2.1px;background:#1a80d6;"></div>
<svg style="left:869px;top:125px;" width="12.5" height="9.6" viewBox="0 0 12.5 9.6"><rect x="1.6" y=".6" width="9.2" height="6.4" rx=".6" fill="#fff" stroke="#7f888f" stroke-width="1.2"/><path d="M0 8.6H12.4" stroke="#7f888f" stroke-width="1.6"/></svg>
<svg style="left:892.2px;top:125px;" width="12.6" height="9.8" viewBox="0 0 12.6 9.8"><rect x=".6" y=".6" width="11.4" height="8.6" rx="1.4" fill="#fff" stroke="#7f888f" stroke-width="1.2"/></svg>
<svg style="left:916.7px;top:124px;" width="9.8" height="12" viewBox="0 0 9.8 12"><rect x=".6" y=".6" width="8.6" height="10.8" rx="1.2" fill="#fff" stroke="#7f888f" stroke-width="1.2"/></svg>
<svg style="left:939px;top:126.5px;" width="11.4" height="6.8" viewBox="0 0 11.4 6.8"><rect x=".6" y=".6" width="10.2" height="5.6" rx=".8" fill="#fff" stroke="#7f888f" stroke-width="1.2"/></svg>
<svg style="left:965px;top:124.7px;" width="6" height="10.4" viewBox="0 0 6 10.4"><rect x=".6" y=".6" width="4.8" height="9.2" rx=".8" fill="#fff" stroke="#7f888f" stroke-width="1.2"/><path d="M2 8.6H4" stroke="#7f888f" stroke-width=".8"/></svg>
<svg style="left:987px;top:125px;" width="11" height="11" viewBox="0 0 11 11"><path d="M10.97 4.96L10.97 6.04L9.29 6.65L8.99 7.37L9.75 8.99L8.99 9.75L7.37 8.99L6.65 9.29L6.04 10.97L4.96 10.97L4.35 9.29L3.63 8.99L2.01 9.75L1.25 8.99L2.01 7.37L1.71 6.65L0.03 6.04L0.03 4.96L1.71 4.35L2.01 3.63L1.25 2.01L2.01 1.25L3.63 2.01L4.35 1.71L4.96 0.03L6.04 0.03L6.65 1.71L7.37 2.01L8.99 1.25L9.75 2.01L8.99 3.63L9.29 4.35Z" fill="#3e4a54"/><circle cx="5.5" cy="5.5" r="1.98" fill="#fff"/></svg>
<!-- scenes panel -->
<div class="a" style="left:16px;top:147.5px;width:146px;height:450px;background:#eff3f6;"></div>
<span class="t" style="left:33.80px;top:156.00px;font-size:12.3px;color:#555b61;transform:scaleX(0.883);">Scenes</span>
<svg style="left:135px;top:157px;" width="10" height="10" viewBox="0 0 10 10"><rect x="2.5" y="1" width="6.5" height="5" fill="none" stroke="#aab3bb" stroke-width="1"/><rect x="2" y="0" width="7.5" height="2" fill="#aab3bb"/><rect x=".5" y="4" width="6.5" height="5.5" fill="#eff3f6" stroke="#aab3bb" stroke-width="1"/><rect x="0" y="3" width="7.5" height="2" fill="#aab3bb"/></svg>
<div class="a" style="left:33.3px;top:177px;width:110.5px;height:23px;background:#fff;border:1px solid #cfd6dc;border-radius:1px;"></div>
<div class="a" style="left:43px;top:180px;width:77px;height:17px;overflow:hidden;"></div>
<div class="a" style="left:43px;top:180px;width:76.6px;height:18px;overflow:hidden">
<span class="t" style="left:0.00px;top:5.00px;font-size:10.4px;color:#555b61;transform:scaleX(0.978);">4 WebEx Messaging</span>
</div>
<svg style="left:128.3px;top:188px;" width="6.6" height="3.8" viewBox="0 0 6.6 3.8"><path d="M0 0H6.6L3.3 3.8Z" fill="#333"/></svg>
<div class="a" style="left:140.8px;top:204px;width:16px;height:380px;background:#e3e8ec;"></div>
<div class="a" style="left:140.8px;top:204px;width:16px;height:16px;background:#fff;border:1px solid #d5dbe0;"></div>
<svg style="left:146px;top:209px;" width="5" height="4.4" viewBox="0 0 5 4.4"><path d="M0 4.4L2.5 0L5 4.4Z" fill="#aab1b8"/></svg>
<div class="a" style="left:140.8px;top:220px;width:16px;height:72px;background:#acb5bc;"></div>
<div class="a" style="left:146.3px;top:251.5px;width:5px;height:1px;background:#e8ecef;"></div>
<div class="a" style="left:146.3px;top:253.7px;width:5px;height:1px;background:#e8ecef;"></div>
<div class="a" style="left:146.3px;top:255.9px;width:5px;height:1px;background:#e8ecef;"></div>
<div class="a" style="left:140.8px;top:583px;width:16px;height:14.5px;background:#eff3f6;"></div>
<svg style="left:146px;top:587px;" width="5" height="4.4" viewBox="0 0 5 4.4"><path d="M0 0H5L2.5 4.4Z" fill="#aab1b8"/></svg>
<div class="a" style="left:16px;top:147.5px;width:125px;height:450px;overflow:hidden"><div class="a" style="left:-16px;top:-147.5px">
<div class="a" style="left:35px;top:215px;width:88px;height:64.6px;background:#f1f4f7;border:1px solid #2f8be6;"></div>
<div class="a" style="left:35px;top:215px;width:88px;height:64.6px;box-shadow:0 0 0 1px #b9d7f5"></div>
<div class="a" style="left:37.5px;top:223.2px;width:83.5px;height:46.6px;background:#fff;"></div>
<div class="a" style="left:37.5px;top:223.2px;width:12.6px;height:46.6px;background:#0a3968;"></div>
<div class="a" style="left:45.4px;top:233.7px;width:2px;height:30px;border-left:1.6px dotted #a9bbd0;opacity:.8"></div>
<div class="a" style="left:41.6px;top:257.2px;width:1px;height:6.4px;background:#7f98b5;"></div>
<div class="a" style="left:107px;top:266.2px;width:9px;height:0.8px;background:#c3c9cf;"></div>
<div class="a" style="left:61.6px;top:232.79999999999998px;width:40px;height:0.8px;background:#cdd2d7;"></div>
<div class="a" style="left:62.5px;top:236.5px;width:14px;height:1.6px;background:#3e4a54;"></div>
<div class="a" style="left:62.5px;top:240.6px;width:36px;height:0.9px;background:#c9ced3;"></div>
<div class="a" style="left:62.5px;top:242.79999999999998px;width:16px;height:0.9px;background:#c9ced3;"></div>
<div class="a" style="left:63.3px;top:247.6px;width:1.5px;height:1.5px;background:#c9ced3;"></div>
<div class="a" style="left:66.4px;top:247.9px;width:7px;height:0.9px;background:#aab0b6;"></div>
<div class="a" style="left:63.3px;top:251.2px;width:1.5px;height:1.5px;background:#7fb2e5;"></div>
<div class="a" style="left:66.4px;top:251.5px;width:10px;height:0.9px;background:#aab0b6;"></div>
<div class="a" style="left:63.3px;top:254.89999999999998px;width:1.5px;height:1.5px;background:#7fb2e5;"></div>
<div class="a" style="left:66.4px;top:255.2px;width:13px;height:0.9px;background:#aab0b6;"></div>
<div class="a" style="left:63.3px;top:258.59999999999997px;width:1.5px;height:1.5px;background:#7fb2e5;"></div>
<div class="a" style="left:66.4px;top:258.9px;width:7px;height:0.9px;background:#aab0b6;"></div>
<div class="a" style="left:61.6px;top:262.8px;width:40px;height:0.6px;background:#e3e7ea;"></div>
<span class="t" style="left:34.40px;top:286.00px;font-size:9.8px;color:#666c72;transform:scaleX(0.860);">Q4.1 Which icons ind...</span>
<div class="a" style="left:37px;top:302.2px;width:84.5px;height:60.5px;background:#f1f4f7;border:1px solid #d9dfe4;"></div>
<div class="a" style="left:37.5px;top:309.4px;width:83.5px;height:46.6px;background:#fff;"></div>
<div class="a" style="left:37.5px;top:309.4px;width:12.6px;height:46.6px;background:#0a3968;"></div>
<div class="a" style="left:45.4px;top:319.9px;width:2px;height:30px;border-left:1.6px dotted #a9bbd0;opacity:.8"></div>
<div class="a" style="left:41.6px;top:343.4px;width:1px;height:6.4px;background:#7f98b5;"></div>
<div class="a" style="left:107px;top:352.4px;width:9px;height:0.8px;background:#c3c9cf;"></div>
<div class="a" style="left:62.5px;top:322.0px;width:13px;height:1.4px;background:#4a5f7a;"></div>
<div class="a" style="left:62.5px;top:325.79999999999995px;width:22px;height:0.9px;background:#cdd2d7;"></div>
<div class="a" style="left:62.5px;top:328.0px;width:12px;height:0.9px;background:#cdd2d7;"></div>
<div class="a" style="left:92px;top:315.0px;width:23px;height:34.4px;background:#1f222a;"></div>
<div class="a" style="left:92px;top:326.79999999999995px;width:23px;height:3px;background:#2f8a43;"></div>
<div class="a" style="left:93.6px;top:321.4px;width:1.4px;height:1.4px;background:#c77;"></div>
<div class="a" style="left:93.6px;top:324.9px;width:1.4px;height:1.4px;background:#79c;"></div>
<div class="a" style="left:93.6px;top:328.4px;width:1.4px;height:1.4px;background:#cb6;"></div>
<div class="a" style="left:93.6px;top:331.9px;width:1.4px;height:1.4px;background:#8b7;"></div>
<div class="a" style="left:93.6px;top:335.4px;width:1.4px;height:1.4px;background:#c77;"></div>
<div class="a" style="left:93.6px;top:338.9px;width:1.4px;height:1.4px;background:#79c;"></div>
<div class="a" style="left:93.6px;top:342.4px;width:1.4px;height:1.4px;background:#cb6;"></div>
<div class="a" style="left:93.6px;top:345.9px;width:1.4px;height:1.4px;background:#8b7;"></div>
<div class="a" style="left:96.4px;top:321.7px;width:7px;height:0.8px;background:#5d646c;"></div>
<div class="a" style="left:96.4px;top:325.2px;width:12px;height:0.8px;background:#5d646c;"></div>
<div class="a" style="left:96.4px;top:328.7px;width:10px;height:0.8px;background:#5d646c;"></div>
<div class="a" style="left:96.4px;top:332.2px;width:8px;height:0.8px;background:#5d646c;"></div>
<div class="a" style="left:96.4px;top:335.7px;width:13px;height:0.8px;background:#5d646c;"></div>
<div class="a" style="left:96.4px;top:339.2px;width:11px;height:0.8px;background:#5d646c;"></div>
<div class="a" style="left:96.4px;top:342.7px;width:9px;height:0.8px;background:#5d646c;"></div>
<div class="a" style="left:96.4px;top:346.2px;width:7px;height:0.8px;background:#5d646c;"></div>
<div class="a" style="left:93px;top:317.0px;width:12px;height:0.8px;background:#6d747c;"></div>
<span class="t" style="left:34.40px;top:372.00px;font-size:9.8px;color:#666c72;transform:scaleX(0.865);">Q4.2 Where would yo...</span>
<div class="a" style="left:37px;top:387.2px;width:84.5px;height:60.5px;background:#f1f4f7;border:1px solid #d9dfe4;"></div>
<div class="a" style="left:37.5px;top:394.4px;width:83.5px;height:46.6px;background:#fff;"></div>
<div class="a" style="left:37.5px;top:394.4px;width:12.6px;height:46.6px;background:#0a3968;"></div>
<div class="a" style="left:45.4px;top:404.9px;width:2px;height:30px;border-left:1.6px dotted #a9bbd0;opacity:.8"></div>
<div class="a" style="left:41.6px;top:428.4px;width:1px;height:6.4px;background:#7f98b5;"></div>
<div class="a" style="left:107px;top:437.4px;width:9px;height:0.8px;background:#c3c9cf;"></div>
<div class="a" style="left:53px;top:399.4px;width:9px;height:1.6px;background:#3e4a54;"></div>
<div class="a" style="left:53px;top:402.4px;width:9px;height:1.4px;background:#3e4a54;"></div>
<div class="a" style="left:53px;top:406.4px;width:8px;height:0.8px;background:#b3b9bf;"></div>
<div class="a" style="left:53px;top:409.59999999999997px;width:11px;height:0.8px;background:#b3b9bf;"></div>
<div class="a" style="left:53px;top:412.79999999999995px;width:9px;height:0.8px;background:#b3b9bf;"></div>
<div class="a" style="left:53px;top:416.0px;width:12px;height:0.8px;background:#b3b9bf;"></div>
<div class="a" style="left:53px;top:419.2px;width:10px;height:0.8px;background:#b3b9bf;"></div>
<div class="a" style="left:53px;top:422.4px;width:8px;height:0.8px;background:#b3b9bf;"></div>
<div class="a" style="left:53px;top:425.59999999999997px;width:11px;height:0.8px;background:#b3b9bf;"></div>
<div class="a" style="left:53px;top:428.79999999999995px;width:9px;height:0.8px;background:#b3b9bf;"></div>
<div class="a" style="left:53px;top:432.0px;width:12px;height:0.8px;background:#b3b9bf;"></div>
<div class="a" style="left:65px;top:402.09999999999997px;width:53px;height:29.7px;background:#1b1e25;"></div>
<div class="a" style="left:81px;top:402.09999999999997px;width:37px;height:5.4px;background:#7a4327;"></div>
<div class="a" style="left:97px;top:402.09999999999997px;width:21px;height:3px;background:#d9742e;"></div>
<div class="a" style="left:65px;top:402.09999999999997px;width:7px;height:29.7px;background:#14161b;"></div>
<div class="a" style="left:74px;top:410.4px;width:12px;height:0.8px;background:#6d747c;"></div>
<div class="a" style="left:74px;top:413.59999999999997px;width:17px;height:0.8px;background:#6d747c;"></div>
<div class="a" style="left:74px;top:416.79999999999995px;width:13px;height:0.8px;background:#6d747c;"></div>
<div class="a" style="left:74px;top:420.0px;width:18px;height:0.8px;background:#6d747c;"></div>
<div class="a" style="left:74px;top:423.2px;width:14px;height:0.8px;background:#6d747c;"></div>
<div class="a" style="left:74px;top:426.4px;width:19px;height:0.8px;background:#6d747c;"></div>
<div class="a" style="left:81px;top:426.9px;width:37px;height:0.9px;background:#c0392b;"></div>
<div class="a" style="left:53px;top:427.9px;width:10px;height:0.8px;background:#7fb2e5;"></div>
<span class="t" style="left:34.40px;top:457.00px;font-size:9.8px;color:#666c72;transform:scaleX(0.870);">Q4.3 Where will the...</span>
<div class="a" style="left:37px;top:472.8px;width:84.5px;height:60.5px;background:#f1f4f7;border:1px solid #d9dfe4;"></div>
<div class="a" style="left:37.5px;top:480.0px;width:83.5px;height:46.6px;background:#fff;"></div>
<div class="a" style="left:37.5px;top:480.0px;width:12.6px;height:46.6px;background:#0a3968;"></div>
<div class="a" style="left:45.4px;top:490.5px;width:2px;height:30px;border-left:1.6px dotted #a9bbd0;opacity:.8"></div>
<div class="a" style="left:41.6px;top:514.0px;width:1px;height:6.4px;background:#7f98b5;"></div>
<div class="a" style="left:107px;top:523.0px;width:9px;height:0.8px;background:#c3c9cf;"></div>
<div class="a" style="left:54px;top:490.5px;width:15px;height:1.6px;background:#3e4a54;"></div>
<div class="a" style="left:54px;top:494.5px;width:26px;height:1px;background:#c3c8cd;"></div>
<div class="a" style="left:89.4px;top:483.0px;width:22.8px;height:38.6px;background:#1c1f26;"></div>
<div class="a" style="left:94px;top:486.0px;width:1.4px;height:1.4px;background:#d77;"></div>
<div class="a" style="left:97px;top:486.2px;width:7px;height:0.8px;background:#7d848c;"></div>
<div class="a" style="left:94px;top:489.4px;width:1.4px;height:1.4px;background:#7ad;"></div>
<div class="a" style="left:97px;top:489.59999999999997px;width:12px;height:0.8px;background:#7d848c;"></div>
<div class="a" style="left:94px;top:492.8px;width:1.4px;height:1.4px;background:#dc6;"></div>
<div class="a" style="left:97px;top:493.0px;width:10px;height:0.8px;background:#7d848c;"></div>
<div class="a" style="left:94px;top:496.2px;width:1.4px;height:1.4px;background:#9c7;"></div>
<div class="a" style="left:97px;top:496.4px;width:8px;height:0.8px;background:#7d848c;"></div>
<div class="a" style="left:94px;top:499.6px;width:1.4px;height:1.4px;background:#d77;"></div>
<div class="a" style="left:97px;top:499.8px;width:13px;height:0.8px;background:#7d848c;"></div>
<div class="a" style="left:94px;top:503.0px;width:1.4px;height:1.4px;background:#7ad;"></div>
<div class="a" style="left:97px;top:503.2px;width:11px;height:0.8px;background:#7d848c;"></div>
<div class="a" style="left:94px;top:506.4px;width:1.4px;height:1.4px;background:#dc6;"></div>
<div class="a" style="left:97px;top:506.59999999999997px;width:9px;height:0.8px;background:#7d848c;"></div>
<div class="a" style="left:94px;top:509.8px;width:1.4px;height:1.4px;background:#9c7;"></div>
<div class="a" style="left:97px;top:510.0px;width:7px;height:0.8px;background:#7d848c;"></div>
<div class="a" style="left:94px;top:513.2px;width:1.4px;height:1.4px;background:#d77;"></div>
<div class="a" style="left:97px;top:513.4px;width:12px;height:0.8px;background:#7d848c;"></div>
<div class="a" style="left:90px;top:516.0px;width:6.4px;height:3.4px;background:#3f9b4a;"></div>
<span class="t" style="left:34.40px;top:542.00px;font-size:9.8px;color:#666c72;transform:scaleX(0.870);">Q4.4 Where do you cl...</span>
<div class="a" style="left:37px;top:558.3px;width:84.5px;height:60.5px;background:#f1f4f7;border:1px solid #d9dfe4;"></div>
<div class="a" style="left:37.5px;top:565.5px;width:83.5px;height:46.6px;background:#fff;"></div>
<div class="a" style="left:37.5px;top:565.5px;width:12.6px;height:46.6px;background:#0a3968;"></div>
<div class="a" style="left:45.4px;top:576.0px;width:2px;height:30px;border-left:1.6px dotted #a9bbd0;opacity:.8"></div>
<div class="a" style="left:41.6px;top:599.5px;width:1px;height:6.4px;background:#7f98b5;"></div>
<div class="a" style="left:107px;top:608.5px;width:9px;height:0.8px;background:#c3c9cf;"></div>
<div class="a" style="left:53px;top:570.5px;width:9px;height:1.6px;background:#3e4a54;"></div>
<div class="a" style="left:53px;top:573.5px;width:9px;height:1.4px;background:#3e4a54;"></div>
<div class="a" style="left:53px;top:577.5px;width:8px;height:0.8px;background:#b3b9bf;"></div>
<div class="a" style="left:53px;top:580.7px;width:11px;height:0.8px;background:#b3b9bf;"></div>
<div class="a" style="left:53px;top:583.9px;width:9px;height:0.8px;background:#b3b9bf;"></div>
<div class="a" style="left:53px;top:587.1px;width:12px;height:0.8px;background:#b3b9bf;"></div>
<div class="a" style="left:53px;top:590.3px;width:10px;height:0.8px;background:#b3b9bf;"></div>
<div class="a" style="left:53px;top:593.5px;width:8px;height:0.8px;background:#b3b9bf;"></div>
<div class="a" style="left:53px;top:596.7px;width:11px;height:0.8px;background:#b3b9bf;"></div>
<div class="a" style="left:53px;top:599.9px;width:9px;height:0.8px;background:#b3b9bf;"></div>
<div class="a" style="left:53px;top:603.1px;width:12px;height:0.8px;background:#b3b9bf;"></div>
<div class="a" style="left:64px;top:571.8px;width:54px;height:32px;background:#1b1e25;"></div>
<div class="a" style="left:64px;top:571.8px;width:54px;height:1.6px;background:#2a2e38;"></div>
<div class="a" style="left:76px;top:577.5px;width:12px;height:0.8px;background:#7d848c;"></div>
<div class="a" style="left:95px;top:577.5px;width:16px;height:0.8px;background:#6d747c;"></div>
<div class="a" style="left:76px;top:580.9px;width:17px;height:0.8px;background:#7d848c;"></div>
<div class="a" style="left:95px;top:580.9px;width:19px;height:0.8px;background:#6d747c;"></div>
<div class="a" style="left:76px;top:584.3px;width:13px;height:0.8px;background:#7d848c;"></div>
<div class="a" style="left:95px;top:584.3px;width:22px;height:0.8px;background:#6d747c;"></div>
<div class="a" style="left:76px;top:587.7px;width:18px;height:0.8px;background:#7d848c;"></div>
<div class="a" style="left:95px;top:587.7px;width:18px;height:0.8px;background:#6d747c;"></div>
<div class="a" style="left:76px;top:591.1px;width:14px;height:0.8px;background:#7d848c;"></div>
<div class="a" style="left:95px;top:591.1px;width:21px;height:0.8px;background:#6d747c;"></div>
<div class="a" style="left:76px;top:594.5px;width:19px;height:0.8px;background:#7d848c;"></div>
<div class="a" style="left:95px;top:594.5px;width:17px;height:0.8px;background:#6d747c;"></div>
<div class="a" style="left:76px;top:597.9px;width:15px;height:0.8px;background:#7d848c;"></div>
<div class="a" style="left:95px;top:597.9px;width:20px;height:0.8px;background:#6d747c;"></div>
<div class="a" style="left:76px;top:601.3px;width:20px;height:0.8px;background:#7d848c;"></div>
<div class="a" style="left:95px;top:601.3px;width:16px;height:0.8px;background:#6d747c;"></div>
</div></div>
<!-- workspace -->
<div class="a" style="left:162px;top:147.5px;width:567.5px;height:317px;background:#b9c1c9;"></div>
<div class="a" style="left:183.6px;top:168.5px;width:1px;height:296px;background:#c0c7ce;"></div>
<div class="a" style="left:270px;top:150.8px;width:387px;height:11.6px;background:#fff;"></div>
<div class="a" style="left:279.20000000000005px;top:155.6px;width:0.9px;height:1.2px;background:#8a9096;"></div>
<div class="a" style="left:298.6px;top:155.6px;width:0.9px;height:1.2px;background:#8a9096;"></div>
<div class="a" style="left:318.0px;top:155.6px;width:0.9px;height:1.2px;background:#8a9096;"></div>
<div class="a" style="left:337.20000000000005px;top:155.6px;width:0.9px;height:1.2px;background:#8a9096;"></div>
<div class="a" style="left:357.6px;top:155.6px;width:0.9px;height:1.2px;background:#8a9096;"></div>
<div class="a" style="left:289.0px;top:154.4px;width:0.9px;height:3.6px;background:#8a9096;"></div>
<div class="a" style="left:327.6px;top:154.4px;width:0.9px;height:3.6px;background:#8a9096;"></div>
<span class="t" style="left:302.00px;top:153.00px;font-size:8.3px;color:#5a6066;transform:scaleX(0.982);">100</span>
<span class="t" style="left:340.60px;top:153.00px;font-size:8.3px;color:#5a6066;transform:scaleX(0.982);">200</span>
<div class="a" style="left:165.9px;top:212px;width:11.2px;height:208px;background:#fff;"></div>
<div class="a" style="left:165.9px;top:212px;width:11.2px;height:208px;overflow:hidden">
<span class="t" style="left:1.2px;top:45.3px;font-size:8.3px;color:#5a6066;transform:rotate(-90deg) scaleX(.98);transform-origin:0 0">100</span>
<div class="a" style="left:4.7px;top:28.400000000000002px;width:1.2px;height:0.9px;background:#9aa0a6;"></div>
<div class="a" style="left:4.7px;top:47.800000000000004px;width:1.2px;height:0.9px;background:#9aa0a6;"></div>
<div class="a" style="left:3.2px;top:18.75px;width:4px;height:0.9px;background:#9aa0a6;"></div>
<span class="t" style="left:1.2px;top:84.0px;font-size:8.3px;color:#5a6066;transform:rotate(-90deg) scaleX(.98);transform-origin:0 0">200</span>
<div class="a" style="left:4.7px;top:67.09999999999998px;width:1.2px;height:0.9px;background:#9aa0a6;"></div>
<div class="a" style="left:4.7px;top:86.49999999999999px;width:1.2px;height:0.9px;background:#9aa0a6;"></div>
<div class="a" style="left:3.2px;top:57.44999999999999px;width:4px;height:0.9px;background:#9aa0a6;"></div>
<span class="t" style="left:1.2px;top:122.7px;font-size:8.3px;color:#5a6066;transform:rotate(-90deg) scaleX(.98);transform-origin:0 0">300</span>
<div class="a" style="left:4.7px;top:105.79999999999997px;width:1.2px;height:0.9px;background:#9aa0a6;"></div>
<div class="a" style="left:4.7px;top:125.19999999999997px;width:1.2px;height:0.9px;background:#9aa0a6;"></div>
<div class="a" style="left:3.2px;top:96.14999999999998px;width:4px;height:0.9px;background:#9aa0a6;"></div>
<span class="t" style="left:1.2px;top:161.4px;font-size:8.3px;color:#5a6066;transform:rotate(-90deg) scaleX(.98);transform-origin:0 0">400</span>
<div class="a" style="left:4.7px;top:144.50000000000003px;width:1.2px;height:0.9px;background:#9aa0a6;"></div>
<div class="a" style="left:4.7px;top:163.9px;width:1.2px;height:0.9px;background:#9aa0a6;"></div>
<div class="a" style="left:3.2px;top:134.85000000000002px;width:4px;height:0.9px;background:#9aa0a6;"></div>
<span class="t" style="left:1.2px;top:200.1px;font-size:8.3px;color:#5a6066;transform:rotate(-90deg) scaleX(.98);transform-origin:0 0">500</span>
<div class="a" style="left:4.7px;top:183.20000000000002px;width:1.2px;height:0.9px;background:#9aa0a6;"></div>
<div class="a" style="left:4.7px;top:202.6px;width:1.2px;height:0.9px;background:#9aa0a6;"></div>
<div class="a" style="left:3.2px;top:173.55px;width:4px;height:0.9px;background:#9aa0a6;"></div>
<div class="a" style="left:4.7px;top:9.400000000000011px;width:1.2px;height:0.9px;background:#9aa0a6;"></div>
</div>
<div class="a" style="left:270px;top:212px;width:387px;height:208px;background:#fff;"></div>
<div class="a" style="left:270px;top:212px;width:55.3px;height:208px;background:#093a69;"></div>
<span class="t" style="left:297px;top:394.5px;font-family:'Liberation Serif',serif;font-size:19px;color:#fff;-webkit-text-stroke:.3px #fff;transform:rotate(-90deg) scaleX(.882);transform-origin:0 0">Show that you know!</span>
<span class="t" style="left:283.6px;top:392.6px;font-size:6.3px;color:#c3d0de;transform:rotate(-90deg) scaleX(.9);transform-origin:0 0">WebEx 101</span>
<!-- timeline -->
<div class="a" style="left:162px;top:464.5px;width:567.5px;height:133px;background:#fff;"></div>
<span class="t" style="left:182.00px;top:471.00px;font-size:12.3px;color:#2a85d8;transform:scaleX(0.989);">Timeline</span>
<span class="t" style="left:247.00px;top:471.00px;font-size:12.3px;color:#555b61;transform:scaleX(0.889);">States</span>
<span class="t" style="left:298.30px;top:471.00px;font-size:12.3px;color:#555b61;transform:scaleX(0.965);">Notes</span>
<div class="a" style="left:162px;top:492px;width:551px;height:21.5px;background:#eff3f6;border-top:1px solid #dfe4e8;border-bottom:1px solid #dfe4e8;"></div>
<div class="a" style="left:162px;top:535px;width:551px;height:1px;background:#e4e8ec;"></div>
<div class="a" style="left:162px;top:558px;width:551px;height:1px;background:#e4e8ec;"></div>
<div class="a" style="left:162px;top:580.3px;width:567.5px;height:1px;background:#dfe4e8;"></div>
<div class="a" style="left:182.5px;top:495.7px;width:14.3px;height:13.6px;background:#fff;border:1px solid #cdd3d8;border-radius:1px;"></div>
<svg style="left:185.2px;top:499.5px;" width="8.8" height="6" viewBox="0 0 8.8 6"><path d="M0 3C2.2 -.8 6.6 -.8 8.8 3C6.6 6.8 2.2 6.8 0 3Z" fill="#65727c"/><circle cx="4.4" cy="3" r="1.7" fill="#fff"/><circle cx="4.4" cy="3" r=".8" fill="#65727c"/></svg>
<div class="a" style="left:209.5px;top:495.7px;width:14.3px;height:13.6px;background:#fff;border:1px solid #cdd3d8;border-radius:1px;"></div>
<svg style="left:213.3px;top:498.6px;" width="7" height="7.4" viewBox="0 0 7 7.4"><rect x="0" y="3" width="7" height="4.4" fill="#6d7379"/><path d="M1.6 3V2A1.9 1.9 0 0 1 5.4 2V3" fill="none" stroke="#6d7379" stroke-width="1.3"/></svg>
<div class="a" style="left:182.5px;top:518px;width:14.3px;height:13.6px;background:#fff;border:1px solid #cdd3d8;border-radius:1px;"></div>
<svg style="left:185.2px;top:521.8000000000001px;" width="8.8" height="6" viewBox="0 0 8.8 6"><path d="M0 3C2.2 -.8 6.6 -.8 8.8 3C6.6 6.8 2.2 6.8 0 3Z" fill="#65727c"/><circle cx="4.4" cy="3" r="1.7" fill="#fff"/><circle cx="4.4" cy="3" r=".8" fill="#65727c"/></svg>
<div class="a" style="left:209.5px;top:518px;width:14.3px;height:13.6px;background:#fff;border:1px solid #cdd3d8;border-radius:1px;"></div>
<span class="t" style="left:240.50px;top:520.00px;font-size:9.8px;color:#555b61;transform:scaleX(0.899);">Text Box</span>
<div class="a" style="left:182.5px;top:540.3px;width:14.3px;height:13.6px;background:#fff;border:1px solid #cdd3d8;border-radius:1px;"></div>
<svg style="left:185.2px;top:544.1px;" width="8.8" height="6" viewBox="0 0 8.8 6"><path d="M0 3C2.2 -.8 6.6 -.8 8.8 3C6.6 6.8 2.2 6.8 0 3Z" fill="#65727c"/><circle cx="4.4" cy="3" r="1.7" fill="#fff"/><circle cx="4.4" cy="3" r=".8" fill="#65727c"/></svg>
<div class="a" style="left:209.5px;top:540.3px;width:14.3px;height:13.6px;background:#fff;border:1px solid #cdd3d8;border-radius:1px;"></div>
<span class="t" style="left:240.50px;top:542.00px;font-size:9.8px;color:#555b61;transform:scaleX(0.899);">Text Box</span>
<div class="a" style="left:182.5px;top:562.6px;width:14.3px;height:13.6px;background:#fff;border:1px solid #cdd3d8;border-radius:1px;"></div>
<svg style="left:185.2px;top:566.4000000000001px;" width="8.8" height="6" viewBox="0 0 8.8 6"><path d="M0 3C2.2 -.8 6.6 -.8 8.8 3C6.6 6.8 2.2 6.8 0 3Z" fill="#65727c"/><circle cx="4.4" cy="3" r="1.7" fill="#fff"/><circle cx="4.4" cy="3" r=".8" fill="#65727c"/></svg>
<div class="a" style="left:209.5px;top:562.6px;width:14.3px;height:13.6px;background:#fff;border:1px solid #cdd3d8;border-radius:1px;"></div>
<span class="t" style="left:240.50px;top:564.00px;font-size:9.8px;color:#555b61;transform:scaleX(0.930);">Multiple Response</span>
<svg style="left:170px;top:566px;" width="4" height="6.6" viewBox="0 0 4 6.6"><path d="M0 0L4 3.3L0 6.6Z" fill="#7d848a"/></svg>
<div class="a" style="left:337.0px;top:507.20000000000005px;width:1px;height:6px;background:#ccd3d9;"></div>
<div class="a" style="left:346.25px;top:509.20000000000005px;width:1px;height:4px;background:#ccd3d9;"></div>
<div class="a" style="left:355.5px;top:509.20000000000005px;width:1px;height:4px;background:#ccd3d9;"></div>
<div class="a" style="left:364.75px;top:509.20000000000005px;width:1px;height:4px;background:#ccd3d9;"></div>
<div class="a" style="left:374.0px;top:507.20000000000005px;width:1px;height:6px;background:#ccd3d9;"></div>
<div class="a" style="left:383.25px;top:509.20000000000005px;width:1px;height:4px;background:#ccd3d9;"></div>
<div class="a" style="left:392.5px;top:509.20000000000005px;width:1px;height:4px;background:#ccd3d9;"></div>
<div class="a" style="left:401.75px;top:509.20000000000005px;width:1px;height:4px;background:#ccd3d9;"></div>
<div class="a" style="left:411.0px;top:507.20000000000005px;width:1px;height:6px;background:#ccd3d9;"></div>
<div class="a" style="left:420.25px;top:509.20000000000005px;width:1px;height:4px;background:#ccd3d9;"></div>
<div class="a" style="left:429.5px;top:509.20000000000005px;width:1px;height:4px;background:#ccd3d9;"></div>
<div class="a" style="left:438.75px;top:509.20000000000005px;width:1px;height:4px;background:#ccd3d9;"></div>
<div class="a" style="left:448.0px;top:507.20000000000005px;width:1px;height:6px;background:#ccd3d9;"></div>
<div class="a" style="left:457.25px;top:509.20000000000005px;width:1px;height:4px;background:#ccd3d9;"></div>
<div class="a" style="left:466.5px;top:509.20000000000005px;width:1px;height:4px;background:#ccd3d9;"></div>
<div class="a" style="left:475.75px;top:509.20000000000005px;width:1px;height:4px;background:#ccd3d9;"></div>
<div class="a" style="left:485.0px;top:507.20000000000005px;width:1px;height:6px;background:#ccd3d9;"></div>
<div class="a" style="left:494.25px;top:509.20000000000005px;width:1px;height:4px;background:#ccd3d9;"></div>
<div class="a" style="left:503.5px;top:509.20000000000005px;width:1px;height:4px;background:#ccd3d9;"></div>
<div class="a" style="left:512.75px;top:509.20000000000005px;width:1px;height:4px;background:#ccd3d9;"></div>
<div class="a" style="left:522.0px;top:507.20000000000005px;width:1px;height:6px;background:#ccd3d9;"></div>
<div class="a" style="left:531.25px;top:509.20000000000005px;width:1px;height:4px;background:#ccd3d9;"></div>
<div class="a" style="left:540.5px;top:509.20000000000005px;width:1px;height:4px;background:#ccd3d9;"></div>
<div class="a" style="left:549.75px;top:509.20000000000005px;width:1px;height:4px;background:#ccd3d9;"></div>
<div class="a" style="left:559.0px;top:507.20000000000005px;width:1px;height:6px;background:#ccd3d9;"></div>
<div class="a" style="left:568.25px;top:509.20000000000005px;width:1px;height:4px;background:#ccd3d9;"></div>
<div class="a" style="left:577.5px;top:509.20000000000005px;width:1px;height:4px;background:#ccd3d9;"></div>
<div class="a" style="left:586.75px;top:509.20000000000005px;width:1px;height:4px;background:#ccd3d9;"></div>
<div class="a" style="left:596.0px;top:507.20000000000005px;width:1px;height:6px;background:#ccd3d9;"></div>
<div class="a" style="left:605.25px;top:509.20000000000005px;width:1px;height:4px;background:#ccd3d9;"></div>
<div class="a" style="left:614.5px;top:509.20000000000005px;width:1px;height:4px;background:#ccd3d9;"></div>
<div class="a" style="left:623.75px;top:509.20000000000005px;width:1px;height:4px;background:#ccd3d9;"></div>
<div class="a" style="left:633.0px;top:507.20000000000005px;width:1px;height:6px;background:#ccd3d9;"></div>
<div class="a" style="left:642.25px;top:509.20000000000005px;width:1px;height:4px;background:#ccd3d9;"></div>
<div class="a" style="left:651.5px;top:509.20000000000005px;width:1px;height:4px;background:#ccd3d9;"></div>
<div class="a" style="left:660.75px;top:509.20000000000005px;width:1px;height:4px;background:#ccd3d9;"></div>
<div class="a" style="left:670.0px;top:507.20000000000005px;width:1px;height:6px;background:#ccd3d9;"></div>
<div class="a" style="left:679.25px;top:509.20000000000005px;width:1px;height:4px;background:#ccd3d9;"></div>
<div class="a" style="left:688.5px;top:509.20000000000005px;width:1px;height:4px;background:#ccd3d9;"></div>
<div class="a" style="left:697.75px;top:509.20000000000005px;width:1px;height:4px;background:#ccd3d9;"></div>
<div class="a" style="left:707.0px;top:507.20000000000005px;width:1px;height:6px;background:#ccd3d9;"></div>
<span class="t" style="left:362.95px;top:497.00px;font-size:8.8px;color:#6d7379;transform:scaleX(0.940);">00:01</span>
<span class="t" style="left:399.95px;top:497.00px;font-size:8.8px;color:#6d7379;transform:scaleX(0.940);">00:02</span>
<span class="t" style="left:436.95px;top:497.00px;font-size:8.8px;color:#6d7379;transform:scaleX(0.940);">00:03</span>
<span class="t" style="left:473.95px;top:497.00px;font-size:8.8px;color:#6d7379;transform:scaleX(0.940);">00:04</span>
<span class="t" style="left:510.95px;top:497.00px;font-size:8.8px;color:#6d7379;transform:scaleX(0.940);">00:05</span>
<span class="t" style="left:547.95px;top:497.00px;font-size:8.8px;color:#6d7379;transform:scaleX(0.940);">00:06</span>
<span class="t" style="left:584.95px;top:497.00px;font-size:8.8px;color:#6d7379;transform:scaleX(0.940);">00:07</span>
<span class="t" style="left:621.95px;top:497.00px;font-size:8.8px;color:#6d7379;transform:scaleX(0.940);">00:08</span>
<span class="t" style="left:658.95px;top:497.00px;font-size:8.8px;color:#6d7379;transform:scaleX(0.940);">00:09</span>
<div class="a" style="left:690px;top:494px;width:21.8px;height:14px;overflow:hidden">
<span class="t" style="left:6.25px;top:3.00px;font-size:8.8px;color:#6d7379;transform:scaleX(0.940);">00:10</span>
</div>
<div class="a" style="left:336.8px;top:514.4px;width:184.5px;height:19.2px;background:#e7ecf0;border-top:1px solid #cdd4da;border-bottom:1px solid #cdd4da;border-right:1px solid #c3ccd4;"></div>
<span class="t" style="left:363.30px;top:520.00px;font-size:9.8px;color:#555b61;transform:scaleX(0.933);">Which icons indicate that a person...</span>
<svg style="left:513.8px;top:521.6px;" width="3.8" height="5.2" viewBox="0 0 3.8 5.2"><path d="M0 0L3.8 2.6L0 5.2Z" fill="#6d7379"/></svg>
<div class="a" style="left:336.8px;top:538px;width:184.5px;height:18px;background:#e7ecf0;border-top:1px solid #cdd4da;border-bottom:1px solid #cdd4da;border-right:1px solid #c3ccd4;"></div>
<span class="t" style="left:363.30px;top:542.00px;font-size:9.8px;color:#555b61;transform:scaleX(0.906);">WebEx Messaging</span>
<svg style="left:513.8px;top:544.4px;" width="3.8" height="5.2" viewBox="0 0 3.8 5.2"><path d="M0 0L3.8 2.6L0 5.2Z" fill="#6d7379"/></svg>
<div class="a" style="left:336.8px;top:560.4px;width:184.5px;height:20px;background:#e7ecf0;border-top:1px solid #cdd4da;border-bottom:1px solid #cdd4da;border-right:1px solid #c3ccd4;"></div>
<span class="t" style="left:363.30px;top:565.00px;font-size:9.8px;color:#555b61;transform:scaleX(0.928);">Multiple Response</span>
<svg style="left:513.8px;top:566.8px;" width="3.8" height="5.2" viewBox="0 0 3.8 5.2"><path d="M0 0L3.8 2.6L0 5.2Z" fill="#6d7379"/></svg>
<svg style="left:342.5px;top:519.3px;" width="12.5" height="10.4" viewBox="0 0 12.5 10.4"><rect x=".5" y=".5" width="11.5" height="9.4" rx="1" fill="#fff" stroke="#8a9096" stroke-width="1"/><rect x="1.2" y="1.2" width="10.1" height="2.6" fill="#f0a23a"/><path d="M1.2 4.2H11.3" stroke="#d0453a" stroke-width=".7"/></svg>
<svg style="left:342.5px;top:541.3px;" width="12.5" height="10.4" viewBox="0 0 12.5 10.4"><rect x=".5" y=".5" width="11.5" height="9.4" rx="1" fill="#fff" stroke="#8a9096" stroke-width="1"/><path d="M6 6H10M6 7.6H9" stroke="#c5cbd1" stroke-width=".7"/></svg>
<span class="t" style="left:344.60px;top:543.00px;font-size:5px;color:#3b6fb5;font-weight:bold;transform:scaleX(0.993);">A</span>
<svg style="left:342.5px;top:563.6px;" width="12.5" height="11.4" viewBox="0 0 12.5 11.4"><rect x=".5" y=".8" width="9.5" height="9.8" fill="#fff" stroke="#6d7379" stroke-width="1"/><rect x="9.2" y="0" width="2.8" height="11.4" fill="#24467f"/><rect x="9.9" y="3" width="1.2" height="4" fill="#9fc0f0"/></svg>
<div class="a" style="left:336px;top:513px;width:1px;height:67.5px;background:#74ade6;"></div>
<svg style="left:330.5px;top:506.3px;" width="12" height="7" viewBox="0 0 12 7"><path d="M0 0H12L6 7Z" fill="#1a80d6"/></svg>
<div class="a" style="left:521px;top:513.5px;width:1px;height:67px;background:#a9bccd;"></div>
<span class="t" style="left:527.50px;top:516.00px;font-size:8.6px;color:#bcc3c9;transform:scaleX(0.948);">End</span>
<div class="a" style="left:713px;top:492.5px;width:15.5px;height:88px;background:#e3e8ec;border-left:1px solid #d9dfe4;"></div>
<svg style="left:718.3px;top:499px;" width="5" height="4.4" viewBox="0 0 5 4.4"><path d="M0 4.4L2.5 0L5 4.4Z" fill="#aab1b8"/></svg>
<svg style="left:718.3px;top:570px;" width="5" height="4.4" viewBox="0 0 5 4.4"><path d="M0 0H5L2.5 4.4Z" fill="#aab1b8"/></svg>
<div class="a" style="left:713px;top:508px;width:15.5px;height:1px;background:#d5dbe0;"></div>
<div class="a" style="left:162px;top:581px;width:551px;height:15.7px;background:#eff3f6;"></div>
<div class="a" style="left:337px;top:581px;width:376px;height:15.7px;background:#e1e6ea;"></div>
<div class="a" style="left:337px;top:581px;width:14.5px;height:15.7px;background:#eaeef1;"></div>
<div class="a" style="left:697.5px;top:581px;width:15.5px;height:15.7px;background:#eaeef1;"></div>
<svg style="left:342.5px;top:587px;" width="3.8" height="4.4" viewBox="0 0 3.8 4.4"><path d="M3.8 0V4.4L0 2.2Z" fill="#aab1b8"/></svg>
<svg style="left:703px;top:587px;" width="3.8" height="4.4" viewBox="0 0 3.8 4.4"><path d="M0 0V4.4L3.8 2.2Z" fill="#aab1b8"/></svg>
<svg style="left:170px;top:585px;" width="5" height="8.8" viewBox="0 0 5 8.8"><path d="M0 0L5 4.4L0 8.8Z" fill="#7d848a"/></svg>
<div class="a" style="left:186.3px;top:586.2px;width:7px;height:7px;background:#8a9096;"></div>
<div class="a" style="left:204.3px;top:584px;width:1px;height:10px;background:#d5dbe0;"></div>
<svg style="left:217px;top:588.7px;" width="9.4" height="4.4" viewBox="0 0 9.4 4.4"><path d="M0 4.4L4.7 0L9.4 4.4Z" fill="#8a9096"/></svg>
<svg style="left:236px;top:587.2px;" width="21" height="5.6" viewBox="0 0 21 5.6"><path d="M5.4 2.8H21" stroke="#6d7379" stroke-width="1.1"/><circle cx="2.9" cy="2.8" r="2.2" fill="#fff" stroke="#6d7379" stroke-width="1.1"/></svg>
<svg style="left:265px;top:586.2px;" width="19.6" height="6.9" viewBox="0 0 19.6 6.9"><path d="M0 6.9L3.2 3.4L5 5.2L5 6.9Z" fill="#8a9096"/><path d="M5 6.9L12 0L19.6 6.9Z" fill="#8a9096"/></svg>
<span class="t" style="left:297.00px;top:586.00px;font-size:9px;color:#555b61;transform:scaleX(0.927);">00:05.00</span>
<svg style="left:658.7px;top:471px;" width="11" height="12.6" viewBox="0 0 11 12.6"><path d="M2.5 0H7.1L4.8 2.6Z" fill="#2a6fc0"/><path d="M4.8 1V12.6" stroke="#2a6fc0" stroke-width="1"/><rect x=".5" y="4.2" width="7.6" height="2.2" rx=".6" fill="#fff" stroke="#7d848a" stroke-width=".9"/><rect x="2.5" y="8.2" width="8" height="2.4" rx=".6" fill="#fff" stroke="#7d848a" stroke-width=".9"/><path d="M4.8 4.2V6.4M4.8 8.2V10.6" stroke="#2a6fc0" stroke-width="1"/></svg>
<svg style="left:686px;top:475.2px;" width="6.4" height="3.6" viewBox="0 0 6.4 3.6"><path d="M0 0H6.4L3.2 3.6Z" fill="#b7bdc3"/></svg>
<svg style="left:699px;top:472px;" width="10" height="10" viewBox="0 0 10 10"><rect x="2.5" y="1" width="6.5" height="5" fill="none" stroke="#aab3bb" stroke-width="1"/><rect x="2" y="0" width="7.5" height="2" fill="#aab3bb"/><rect x=".5" y="4" width="6.5" height="5.5" fill="#fff" stroke="#aab3bb" stroke-width="1"/><rect x="0" y="3" width="7.5" height="2" fill="#aab3bb"/></svg>
<!-- right panel -->
<div class="a" style="left:729px;top:147.5px;width:270px;height:450px;background:#eff3f6;"></div>
<span class="t" style="left:746.00px;top:157.00px;font-size:12.3px;color:#555b61;transform:scaleX(0.987);">Question</span>
<svg style="left:965.6px;top:160.8px;" width="6.2" height="3.3" viewBox="0 0 6.2 3.3"><path d="M0 0H6.2L3.1 3.3Z" fill="#b0b6bb"/></svg>
<svg style="left:979px;top:158px;" width="10" height="10" viewBox="0 0 10 10"><rect x="2.5" y="1" width="6.5" height="5" fill="none" stroke="#aab3bb" stroke-width="1"/><rect x="2" y="0" width="7.5" height="2" fill="#aab3bb"/><rect x=".5" y="4" width="6.5" height="5.5" fill="#eff3f6" stroke="#aab3bb" stroke-width="1"/><rect x="0" y="3" width="7.5" height="2" fill="#aab3bb"/></svg>
<div class="a" style="left:729px;top:178px;width:270px;height:52px;background:#fff;border-top:1px solid #e1e6ea;border-bottom:1px solid #e1e6ea;"></div>
<div class="a" style="left:740.4px;top:186px;width:255.6px;height:36px;background:#fff;border:1px solid #d5dce2;"></div>
<div class="a" style="left:868px;top:186px;width:128px;height:36px;background:#1a80d6;"></div>
<svg style="left:744.3px;top:193px;" width="25.2" height="21.6" viewBox="0 0 25.2 21.6"><rect x=".6" y=".6" width="24" height="20.4" rx="1" fill="#fff" stroke="#2a7fd0" stroke-width="1.2"/><path d="M.6 2H24.6" stroke="#2a7fd0" stroke-width="1.6"/><path d="M8.4 6.4H21.6M8.4 11H21.6M8.4 15.6H21.6" stroke="#2a7fd0" stroke-width="1.7"/><path d="M3.2 6.4H5.6M3.2 11H5.6M3.2 15.6H5.6" stroke="#2a7fd0" stroke-width="1.2"/></svg>
<span class="t" style="left:778.70px;top:200.00px;font-size:9.8px;color:#555b61;transform:scaleX(1.014);">Form View</span>
<svg style="left:872.8px;top:193px;" width="25.2" height="21.6" viewBox="0 0 25.2 21.6"><rect x=".6" y=".6" width="24" height="20.4" rx="1" fill="none" stroke="#fff" stroke-width="1.2"/><path d="M.6 2H24.6" stroke="#fff" stroke-width="1.4"/><path d="M7 1V21" stroke="#fff" stroke-width="1"/><rect x="2.4" y="4.6" width="2.4" height="2.4" fill="none" stroke="#fff" stroke-width=".9"/><rect x="2.4" y="9" width="2.4" height="2.4" fill="none" stroke="#fff" stroke-width=".9"/><rect x="2.4" y="13.4" width="2.4" height="2.4" fill="none" stroke="#fff" stroke-width=".9"/><rect x="9.6" y="4.4" width="12.6" height="11" fill="#7fb6ea" stroke="#fff" stroke-width="1"/><rect x="12" y="6.6" width="7.8" height="6.6" fill="none" stroke="#fff" stroke-width=".9"/><path d="M13.4 8.6H18M13.4 10.6H16" stroke="#fff" stroke-width=".8"/><path d="M7 18.4H24.6" stroke="#fff" stroke-width="1"/></svg>
<span class="t" style="left:907.00px;top:200.00px;font-size:9.8px;color:#fff;">Slide View</span>
<span class="t" style="left:746.00px;top:240.00px;font-size:12.3px;color:#555b61;transform:scaleX(0.963);">Triggers</span>
<svg style="left:965.6px;top:245.2px;" width="6.2" height="3.3" viewBox="0 0 6.2 3.3"><path d="M0 0H6.2L3.1 3.3Z" fill="#b0b6bb"/></svg>
<svg style="left:979px;top:241px;" width="10" height="10" viewBox="0 0 10 10"><rect x="2.5" y="1" width="6.5" height="5" fill="none" stroke="#aab3bb" stroke-width="1"/><rect x="2" y="0" width="7.5" height="2" fill="#aab3bb"/><rect x=".5" y="4" width="6.5" height="5.5" fill="#eff3f6" stroke="#aab3bb" stroke-width="1"/><rect x="0" y="3" width="7.5" height="2" fill="#aab3bb"/></svg>
<div class="a" style="left:746px;top:261.5px;width:21.5px;height:21.2px;background:#fff;border:1px solid #c9cfd5;border-radius:1px;"></div>
<svg style="left:752.3px;top:266.4px;" width="9" height="11.4" viewBox="0 0 9 11.4"><path d="M.6 .6H5.6L8.4 3.4V10.8H.6Z" fill="#fff" stroke="#555b61" stroke-width="1.1"/><path d="M5.6 .6V3.4H8.4" fill="none" stroke="#555b61" stroke-width=".9"/></svg>
<div class="a" style="left:769.3px;top:261.5px;width:21.5px;height:21.2px;background:#eef0f2;border:1px solid #c8cdd2;border-radius:1px;"></div>
<svg style="left:774.6px;top:266.2px;" width="11" height="11.6" viewBox="0 0 11 11.6"><rect x=".6" y="1.6" width="8.4" height="9.4" fill="#fff" stroke="#a2a8ae" stroke-width="1"/><path d="M9.6 .8L5 6.4L4.4 8.2L6.2 7.4L10.6 1.8Z" fill="#fff" stroke="#a2a8ae" stroke-width=".9"/><path d="M2.4 4H5" stroke="#a2a8ae" stroke-width=".8"/></svg>
<div class="a" style="left:792.6px;top:261.5px;width:21.5px;height:21.2px;background:#eef0f2;border:1px solid #c8cdd2;border-radius:1px;"></div>
<svg style="left:797.4px;top:265.8px;" width="7.6" height="9.4" viewBox="0 0 7.6 9.4"><path d="M.6 .6H4.199999999999999L7.0 3.4V8.8H.6Z" fill="#eef0f2" stroke="#a2a8ae" stroke-width="1.1"/><path d="M4.199999999999999 .6V3.4H7.0" fill="none" stroke="#a2a8ae" stroke-width=".9"/></svg>
<svg style="left:800.4px;top:268.4px;" width="7.6" height="9.4" viewBox="0 0 7.6 9.4"><path d="M.6 .6H4.199999999999999L7.0 3.4V8.8H.6Z" fill="#fff" stroke="#a2a8ae" stroke-width="1.1"/><path d="M4.199999999999999 .6V3.4H7.0" fill="none" stroke="#a2a8ae" stroke-width=".9"/></svg>
<div class="a" style="left:815.8px;top:261.5px;width:21.5px;height:21.2px;background:#eef0f2;border:1px solid #c8cdd2;border-radius:1px;"></div>
<svg style="left:820.6px;top:265.6px;" width="12" height="12.4" viewBox="0 0 12 12.4"><rect x=".6" y="1.6" width="8" height="9.6" fill="#eef0f2" stroke="#a2a8ae" stroke-width="1"/><rect x="2.6" y=".4" width="4" height="2.2" fill="#a2a8ae"/><path d="M4.6 4.6H8.8L11.2 7V11.8H4.6Z" fill="#fff" stroke="#a2a8ae" stroke-width="1"/></svg>
<div class="a" style="left:839.3px;top:261.5px;width:21.5px;height:21.2px;background:#eef0f2;border:1px solid #c8cdd2;border-radius:1px;"></div>
<svg style="left:845px;top:266px;" width="10" height="12" viewBox="0 0 10 12"><path d="M0 2.6H10" stroke="#b1b7bc" stroke-width="1.1"/><path d="M3.4 2.4V.6H6.6V2.4" fill="none" stroke="#b1b7bc" stroke-width="1"/><path d="M1.3 3.2L2 11.4H8L8.7 3.2" fill="#fff" stroke="#b1b7bc" stroke-width="1.1"/><path d="M3.8 4.8V9.8M6.2 4.8V9.8" stroke="#b1b7bc" stroke-width=".8"/></svg>
<div class="a" style="left:862.5px;top:261.5px;width:21.5px;height:21.2px;background:#eef0f2;border:1px solid #c8cdd2;border-radius:1px;"></div>
<div class="a" style="left:862.5px;top:271.6px;width:21.5px;height:1px;background:#d0d4d8;"></div>
<svg style="left:870.8px;top:265.6px;" width="5" height="3" viewBox="0 0 5 3"><path d="M0 3L2.5 0L5 3Z" fill="#a2a8ae"/></svg>
<svg style="left:870.8px;top:275.6px;" width="5" height="3" viewBox="0 0 5 3"><path d="M0 0H5L2.5 3Z" fill="#a2a8ae"/></svg>
<div class="a" style="left:914px;top:265px;width:14px;height:14px;background:#fff;border:1px solid #cdd3d8;border-radius:1px;"></div>
<span class="t" style="left:934.20px;top:268.00px;font-size:9.8px;color:#555b61;transform:scaleX(1.028);">Group</span>
<div class="a" style="left:969.4px;top:261.5px;width:21.5px;height:21.2px;background:#fff;border:1px solid #c9cfd5;border-radius:1px;"></div>
<svg style="left:973.6px;top:267px;" width="13" height="10.6" viewBox="0 0 13 10.6"><rect x=".6" y=".6" width="11.8" height="9.4" rx="1" fill="#edf1f6" stroke="#6d7379" stroke-width="1"/><rect x=".6" y=".6" width="11.8" height="2.2" fill="#6d7379"/></svg>
<span class="t" style="left:976.70px;top:272.00px;font-size:5.6px;color:#2a62b5;transform:scaleX(1.072);">(x)</span>
<div class="a" style="left:729px;top:292.2px;width:270px;height:72.2px;background:#fff;border-top:1px solid #e1e6ea;"></div>
<div class="a" style="left:732.6px;top:293px;width:254.5px;height:22.5px;background:#eff3f6;border-bottom:1px solid #e1e6ea;"></div>
<span class="t" style="left:739.00px;top:301.00px;font-size:9.8px;color:#3e444a;-webkit-text-stroke:.3px #3e444a;transform:scaleX(1.081);">Player Triggers</span>
<svg style="left:970.5px;top:299px;" width="7.4" height="10.4" viewBox="0 0 7.4 10.4"><path d="M0 .5H7.4M0 9.9H7.4" stroke="#9aa1a8" stroke-width="1"/><path d="M1.2 1.6H6.2L3.7 4.6Z" fill="#9aa1a8"/><path d="M1.2 8.8H6.2L3.7 5.8Z" fill="#9aa1a8"/></svg>
<div class="a" style="left:732.6px;top:315.5px;width:254.5px;height:22px;background:#fcfcfd;border-bottom:1px solid #e4e8ec;"></div>
<svg style="left:739px;top:325.4px;" width="6" height="3.4" viewBox="0 0 6 3.4"><path d="M0 0H6L3.0 3.4Z" fill="#aab1b8"/></svg>
<span class="t" style="left:760.00px;top:322.00px;font-size:9.8px;color:#3e444a;font-weight:bold;transform:scaleX(0.939);">Submit Button</span>
<span class="t" style="left:760.00px;top:344.00px;font-size:9.6px;color:#555b61;transform:scaleX(0.956);">Submit <span style="color:#1f6fa8">Multiple Response</span></span>
<div class="a" style="left:760px;top:356px;width:220px;height:8.4px;overflow:hidden">
<span class="t" style="left:11.70px;top:3.00px;font-size:9.6px;color:#555b61;transform:scaleX(0.959);">When the <span style="color:#5b7a2a">user clicks</span> <span style="color:#1f6fa8">submit</span></span>
</div>
<div class="a" style="left:987.3px;top:293.4px;width:11.7px;height:71px;background:#fff;border-left:1px solid #dfe4e8;"></div>
<svg style="left:991px;top:298.6px;" width="5" height="4" viewBox="0 0 5 4"><path d="M0 4L2.5 0L5 4Z" fill="#aab1b8"/></svg>
<div class="a" style="left:987.3px;top:308px;width:11.7px;height:39px;background:#a3abb2;"></div>
<div class="a" style="left:990.6px;top:325.6px;width:5px;height:0.9px;background:#e3e7ea;"></div>
<div class="a" style="left:990.6px;top:327.6px;width:5px;height:0.9px;background:#e3e7ea;"></div>
<div class="a" style="left:990.6px;top:329.6px;width:5px;height:0.9px;background:#e3e7ea;"></div>
<svg style="left:991px;top:353.6px;" width="5" height="4" viewBox="0 0 5 4"><path d="M0 0H5L2.5 4Z" fill="#aab1b8"/></svg>
<div class="a" style="left:729px;top:364.4px;width:270px;height:33px;background:#eff3f6;border-top:1px solid #dfe4e8;border-bottom:1px solid #dfe4e8;"></div>
<span class="t" style="left:746.00px;top:375.00px;font-size:12.3px;color:#555b61;transform:scaleX(0.982);">Comments</span>
<div class="a" style="left:932.3px;top:374.4px;width:28.7px;height:13.2px;background:linear-gradient(90deg,#2f8cf5,#8a55e6);border-radius:2px;"></div>
<span class="t" style="left:936.40px;top:377.00px;font-size:9.6px;color:#fff;transform:scaleX(1.013);">Beta</span>
<svg style="left:965.8px;top:378.3px;" width="4.2" height="6.4" viewBox="0 0 4.2 6.4"><path d="M4.2 0V6.4L0 3.2Z" fill="#aab1b8"/></svg>
<svg style="left:979px;top:376px;" width="10" height="10" viewBox="0 0 10 10"><rect x="2.5" y="1" width="6.5" height="5" fill="none" stroke="#aab3bb" stroke-width="1"/><rect x="2" y="0" width="7.5" height="2" fill="#aab3bb"/><rect x=".5" y="4" width="6.5" height="5.5" fill="#eff3f6" stroke="#aab3bb" stroke-width="1"/><rect x="0" y="3" width="7.5" height="2" fill="#aab3bb"/></svg>
<span class="t" style="left:746.00px;top:408.00px;font-size:12.3px;color:#555b61;transform:scaleX(0.946);">Slide Layers</span>
<svg style="left:965.6px;top:411.6px;" width="6.2" height="3.3" viewBox="0 0 6.2 3.3"><path d="M0 0H6.2L3.1 3.3Z" fill="#b0b6bb"/></svg>
<svg style="left:979px;top:409px;" width="10" height="10" viewBox="0 0 10 10"><rect x="2.5" y="1" width="6.5" height="5" fill="none" stroke="#aab3bb" stroke-width="1"/><rect x="2" y="0" width="7.5" height="2" fill="#aab3bb"/><rect x=".5" y="4" width="6.5" height="5.5" fill="#eff3f6" stroke="#aab3bb" stroke-width="1"/><rect x="0" y="3" width="7.5" height="2" fill="#aab3bb"/></svg>
<div class="a" style="left:729px;top:429.4px;width:270px;height:127.5px;background:#fff;border-top:1px solid #dfe4e8;"></div>
<div class="a" style="left:732.5px;top:532.5px;width:266.5px;height:24.3px;background:#1a80d6;"></div>
<div class="a" style="left:746.3px;top:538.3px;width:23.7px;height:12.5px;background:#fff;"></div>
<div class="a" style="left:746.3px;top:538.3px;width:3.6px;height:12.5px;background:#0a3968;"></div>
<div class="a" style="left:753.4px;top:541.6px;width:5.5px;height:0.9px;background:#aab1b8;"></div>
<div class="a" style="left:753.4px;top:544.8px;width:3.6px;height:0.8px;background:#c3c9ce;"></div>
<div class="a" style="left:753.4px;top:547px;width:3.6px;height:0.8px;background:#c3c9ce;"></div>
<span class="t" style="left:780.80px;top:540.00px;font-size:9.8px;color:#fff;transform:scaleX(0.937);">Which icons indicate that a pers...</span>
<span class="t" style="left:923.60px;top:540.00px;font-size:9.8px;color:#fff;font-style:italic;transform:scaleX(0.884);">(Base Layer)</span>
<svg style="left:982px;top:540.6px;" width="9.4" height="6.4" viewBox="0 0 9.4 6.4"><path d="M0 3.2C2.4 -.8 7 -.8 9.4 3.2C7 7.2 2.4 7.2 0 3.2Z" fill="#fff"/><circle cx="4.7" cy="3.2" r="1.6" fill="#1a80d6"/></svg>
<div class="a" style="left:746.3px;top:567.3px;width:21.3px;height:21.2px;background:#fff;border:1px solid #c9cfd5;border-radius:1px;"></div>
<svg style="left:752.4px;top:572.2px;" width="9" height="11.4" viewBox="0 0 9 11.4"><path d="M.6 .6H5.6L8.4 3.4V10.8H.6Z" fill="#fff" stroke="#555b61" stroke-width="1.1"/><path d="M5.6 .6V3.4H8.4" fill="none" stroke="#555b61" stroke-width=".9"/></svg>
<div class="a" style="left:769.3px;top:567.3px;width:21.3px;height:21.2px;background:#fff;border:1px solid #c9cfd5;border-radius:1px;"></div>
<svg style="left:774.4px;top:571.6px;" width="12" height="12.6" viewBox="0 0 12 12.6"><path d="M.6 3.6L3.4 .8H8.4V9.6H.6Z" fill="#fff" stroke="#3e4a54" stroke-width="1"/><path d="M3.6 6.4L6.4 3.6H11.4V12H3.6Z" fill="#fff" stroke="#3e4a54" stroke-width="1"/><path d="M5.2 9L7 10.8L10.4 5.6" fill="none" stroke="#3f9b4a" stroke-width="1.7"/></svg>
<div class="a" style="left:793px;top:567.3px;width:21.5px;height:21.2px;background:#eef0f2;border:1px solid #c8cdd2;border-radius:1px;"></div>
<svg style="left:798.8px;top:572px;" width="10" height="12" viewBox="0 0 10 12"><path d="M0 2.6H10" stroke="#b1b7bc" stroke-width="1.1"/><path d="M3.4 2.4V.6H6.6V2.4" fill="none" stroke="#b1b7bc" stroke-width="1"/><path d="M1.3 3.2L2 11.4H8L8.7 3.2" fill="#fff" stroke="#b1b7bc" stroke-width="1.1"/><path d="M3.8 4.8V9.8M6.2 4.8V9.8" stroke="#b1b7bc" stroke-width=".8"/></svg>
<div class="a" style="left:822px;top:571.5px;width:14.2px;height:14.5px;background:#fff;border:1px solid #cdd3d8;border-radius:1px;"></div>
<svg style="left:825px;top:575.6px;" width="8.6" height="6.6" viewBox="0 0 8.6 6.6"><path d="M.6 3.2L3.2 5.8L8 .8" fill="none" stroke="#1a80d6" stroke-width="1.5"/></svg>
<span class="t" style="left:842.20px;top:576.00px;font-size:10.4px;color:#555b61;transform:scaleX(0.942);">Dim</span>
<div class="a" style="left:976px;top:567.3px;width:21.2px;height:21.8px;background:#fff;border:1px solid #c9cfd5;border-radius:1px;"></div>
<svg style="left:981.4px;top:573px;" width="10.4" height="10.4" viewBox="0 0 10.4 10.4"><path d="M10.37 4.69L10.37 5.71L8.78 6.29L8.50 6.96L9.22 8.50L8.50 9.22L6.96 8.50L6.29 8.78L5.71 10.37L4.69 10.37L4.11 8.78L3.44 8.50L1.90 9.22L1.18 8.50L1.90 6.96L1.62 6.29L0.03 5.71L0.03 4.69L1.62 4.11L1.90 3.44L1.18 1.90L1.90 1.18L3.44 1.90L4.11 1.62L4.69 0.03L5.71 0.03L6.29 1.62L6.96 1.90L8.50 1.18L9.22 1.90L8.50 3.44L8.78 4.11Z" fill="#8a9096"/><circle cx="5.2" cy="5.2" r="1.87" fill="#fff"/></svg>
<!-- status bar -->
<div class="a" style="left:15px;top:597px;width:984px;height:25px;background:#38343a;"></div>
<span class="t" style="left:23.70px;top:606.00px;font-size:9.3px;color:#c9c9cb;transform:scaleX(0.934);">Slide 1 of 20</span>
<span class="t" style="left:84.30px;top:606.00px;font-size:9.3px;color:#c9c9cb;transform:scaleX(0.923);">960 × 540</span>
<span class="t" style="left:135.70px;top:606.00px;font-size:9.3px;color:#c9c9cb;transform:scaleX(0.891);">"Synergy"</span>
<svg style="left:796.8px;top:604.7px;" width="9.8" height="8.8" viewBox="0 0 9.8 8.8"><rect x="0" y="0" width="4" height="3.6" fill="#d0d0d2"/><rect x="5.6" y="0" width="4" height="3.6" fill="#d0d0d2"/><rect x="0" y="5.2" width="4" height="3.6" fill="#d0d0d2"/><rect x="5.6" y="5.2" width="4" height="3.6" fill="#d0d0d2"/></svg>
<div class="a" style="left:811.8px;top:601px;width:18.2px;height:16.6px;background:#4b484e;"></div>
<svg style="left:816px;top:604.7px;" width="9.6" height="8.8" viewBox="0 0 9.6 8.8"><rect x=".5" y=".5" width="8.6" height="7.8" fill="none" stroke="#d0d0d2" stroke-width="1"/><rect x=".5" y=".5" width="2.4" height="7.8" fill="#d0d0d2"/><rect x="4.4" y="2.2" width="3.2" height="2.8" fill="#d0d0d2"/></svg>
<svg style="left:835.2px;top:604.6px;" width="9.6" height="9" viewBox="0 0 9.6 9"><path d="M0 .5H9.6" stroke="#d0d0d2" stroke-width="1"/><path d="M1.2 1.4V4A3.6 3 0 0 0 8.4 4V1.4" fill="none" stroke="#d0d0d2" stroke-width="1"/><path d="M4.8 6.6V8M2.4 8.5H7.2" stroke="#d0d0d2" stroke-width="1"/><path d="M3.2 3H6.4" stroke="#d0d0d2" stroke-width=".8"/></svg>
<span class="t" style="left:852.00px;top:606.00px;font-size:9px;color:#c9c9cb;transform:scaleX(0.910);">50%</span>
<div class="a" style="left:876.4px;top:609.5px;width:6px;height:1.2px;background:#d0d0d2;"></div>
<div class="a" style="left:885.8px;top:609.6px;width:77.6px;height:1px;background:#d0d0d2;"></div>
<svg style="left:901.4px;top:606.5px;" width="7.2" height="7.2" viewBox="0 0 7.2 7.2"><circle cx="3.6" cy="3.6" r="2.8" fill="#38353a" stroke="#e6e6e8" stroke-width="1.2"/></svg>
<div class="a" style="left:925.6px;top:607.2px;width:1px;height:5.6px;background:#d0d0d2;"></div>
<div class="a" style="left:967px;top:609.5px;width:6.4px;height:1.2px;background:#d0d0d2;"></div>
<div class="a" style="left:969.6px;top:606.9px;width:1.2px;height:6.4px;background:#d0d0d2;"></div>
<svg style="left:979.5px;top:604.7px;" width="10.5" height="9.8" viewBox="0 0 10.5 9.8"><rect x=".5" y=".5" width="9.5" height="8.8" fill="none" stroke="#d0d0d2" stroke-width="1"/><path d="M2.4 2.4L4 4M8.1 2.4L6.5 4M2.4 7.4L4 5.8M8.1 7.4L6.5 5.8" stroke="#d0d0d2" stroke-width="1"/><path d="M2 3.6V2H3.6M6.9 2H8.5V3.6M2 6.2V7.8H3.6M6.9 7.8H8.5V6.2" fill="none" stroke="#d0d0d2" stroke-width=".8"/></svg>
<!-- dialog -->
<div class="a" style="left:363.7px;top:117.3px;width:294px;height:378px;background:#fff;border:1px solid #b3bac0;border-right-color:#a4abb1;border-bottom-color:#a4abb1;box-shadow:0 2px 6px rgba(0,0,0,.28),0 0 2px rgba(0,0,0,.2);"></div>
<div class="a" style="left:364.7px;top:118.3px;width:292px;height:34.5px;background:#dde4e9;"></div>
<span class="t" style="left:380.00px;top:131.00px;font-size:12.6px;color:#4f555b;transform:scaleX(0.940);">Slide Properties</span>
<svg style="left:633.2px;top:131.7px;" width="8.2" height="7.8" viewBox="0 0 8.2 7.8"><path d="M.5 .5L7.7 7.3M7.7 .5L.5 7.3" stroke="#bcc3c9" stroke-width="1.2"/></svg>
<span class="t" style="left:381.70px;top:168.00px;font-size:10.4px;color:#3e444a;-webkit-text-stroke:.5px #3e444a;transform:scaleX(1.047);">Properties for "Q4.1 Which icons indicate that a per...</span>
<span class="t" style="left:381.70px;top:191.00px;font-size:10px;color:#4f555b;transform:scaleX(0.984);">Slide advances:</span>
<div class="a" style="left:461.9px;top:184px;width:175.3px;height:23.4px;background:#fff;border:1px solid #c5ced6;border-radius:2px;box-shadow:0 1px 0 #e9edf0;"></div>
<span class="t" style="left:472.00px;top:192.00px;font-size:10px;color:#4f555b;transform:scaleX(0.953);">By user</span>
<svg style="left:622.2px;top:194.29999999999998px;" width="6" height="3.4" viewBox="0 0 6 3.4"><path d="M0 0H6L3.0 3.4Z" fill="#222"/></svg>
<span class="t" style="left:381.70px;top:216.00px;font-size:10px;color:#4f555b;transform:scaleX(1.009);">When revisiting:</span>
<div class="a" style="left:461.9px;top:210.2px;width:175.3px;height:22.8px;background:#fff;border:1px solid #c5ced6;border-radius:2px;box-shadow:0 1px 0 #e9edf0;"></div>
<span class="t" style="left:472.00px;top:217.00px;font-size:10px;color:#4f555b;">Automatically decide</span>
<svg style="left:622.2px;top:220.2px;" width="6" height="3.4" viewBox="0 0 6 3.4"><path d="M0 0H6L3.0 3.4Z" fill="#222"/></svg>
<span class="t" style="left:381.70px;top:243.00px;font-size:10.4px;color:#3e444a;-webkit-text-stroke:.5px #3e444a;transform:scaleX(1.068);">Slide navigation controls</span>
<span class="t" style="left:381.70px;top:264.00px;font-size:10px;color:#4f555b;transform:scaleX(0.984);">Buttons:</span>
<div class="a" style="left:430.2px;top:261px;width:13.8px;height:13.8px;background:#fff;border:1px solid #c5ccd3;border-radius:1.5px;"></div>
<span class="t" style="left:450.90px;top:264.00px;font-size:10px;color:#4f555b;transform:scaleX(0.909);">Prev</span>
<div class="a" style="left:501px;top:261px;width:13.8px;height:13.8px;background:#fff;border:1px solid #c5ccd3;border-radius:1.5px;"></div>
<span class="t" style="left:522.00px;top:264.00px;font-size:10px;color:#4f555b;transform:scaleX(0.973);">Next</span>
<div class="a" style="left:572.8px;top:261px;width:13.8px;height:13.8px;background:#fff;border:1px solid #c5ccd3;border-radius:1.5px;"></div>
<svg style="left:575.5999999999999px;top:264.6px;" width="8.4" height="6.6" viewBox="0 0 8.4 6.6"><path d="M.6 3.2L3.2 5.8L7.8 .8" fill="none" stroke="#1a80d6" stroke-width="1.5"/></svg>
<span class="t" style="left:593.20px;top:264.00px;font-size:10px;color:#4f555b;transform:scaleX(0.964);">Submit</span>
<span class="t" style="left:381.70px;top:288.00px;font-size:10px;color:#4f555b;">Swipe:</span>
<div class="a" style="left:430.2px;top:285.4px;width:13.8px;height:13.8px;background:#fff;border:1px solid #c5ccd3;border-radius:1.5px;"></div>
<span class="t" style="left:450.90px;top:288.00px;font-size:10px;color:#4f555b;transform:scaleX(0.909);">Prev</span>
<div class="a" style="left:501px;top:285.4px;width:13.8px;height:13.8px;background:#fff;border:1px solid #c5ccd3;border-radius:1.5px;"></div>
<span class="t" style="left:522.00px;top:288.00px;font-size:10px;color:#4f555b;transform:scaleX(0.973);">Next</span>
<span class="t" style="left:381.70px;top:312.00px;font-size:10px;color:#4f555b;transform:scaleX(1.009);">When revisiting:</span>
<div class="a" style="left:501px;top:309px;width:13.8px;height:13.8px;background:#fff;border:1px solid #c5ccd3;border-radius:1.5px;"></div>
<svg style="left:503.8px;top:312.6px;" width="8.4" height="6.6" viewBox="0 0 8.4 6.6"><path d="M.6 3.2L3.2 5.8L7.8 .8" fill="none" stroke="#1a80d6" stroke-width="1.5"/></svg>
<span class="t" style="left:522.00px;top:312.00px;font-size:10px;color:#4f555b;transform:scaleX(1.006);">Enable player navigation</span>
<span class="t" style="left:381.70px;top:339.00px;font-size:10.4px;color:#3e444a;-webkit-text-stroke:.5px #3e444a;transform:scaleX(1.013);">Player features</span>
<div class="a" style="left:381px;top:355.4px;width:216.8px;height:23.1px;background:#fff;border:1px solid #c5ced6;border-radius:2px;box-shadow:0 1px 0 #e9edf0;"></div>
<span class="t" style="left:391.70px;top:363.00px;font-size:10px;color:#4f555b;transform:scaleX(1.013);">Custom for the selected slides</span>
<svg style="left:582.8px;top:365.55px;" width="6" height="3.4" viewBox="0 0 6 3.4"><path d="M0 0H6L3.0 3.4Z" fill="#222"/></svg>
<span class="t" style="left:608.60px;top:364.00px;font-size:10px;color:#4f555b;transform:scaleX(0.938);">Reset</span>
<div class="a" style="left:381px;top:389px;width:13.8px;height:13.8px;background:#fff;border:1px solid #c5ccd3;border-radius:1.5px;"></div>
<span class="t" style="left:401.80px;top:393.00px;font-size:10px;color:#4f555b;transform:scaleX(1.027);">Menu</span>
<div class="a" style="left:469.6px;top:389px;width:13.8px;height:13.8px;background:#fff;border:1px solid #c5ccd3;border-radius:1.5px;"></div>
<span class="t" style="left:490.30px;top:393.00px;font-size:10px;color:#4f555b;transform:scaleX(0.973);">Glossary</span>
<div class="a" style="left:557.4px;top:389px;width:13.8px;height:13.8px;background:#fff;border:1px solid #c5ccd3;border-radius:1.5px;"></div>
<span class="t" style="left:578.00px;top:393.00px;font-size:10px;color:#4f555b;transform:scaleX(0.964);">Seekbar</span>
<div class="a" style="left:381px;top:410px;width:13.8px;height:13.8px;background:#fff;border:1px solid #c5ccd3;border-radius:1.5px;"></div>
<span class="t" style="left:401.80px;top:414.00px;font-size:10px;color:#4f555b;transform:scaleX(0.956);">Resources</span>
<div class="a" style="left:469.6px;top:410px;width:13.8px;height:13.8px;background:#fff;border:1px solid #c5ccd3;border-radius:1.5px;"></div>
<svg style="left:472.40000000000003px;top:413.6px;" width="8.4" height="6.6" viewBox="0 0 8.4 6.6"><path d="M.6 3.2L3.2 5.8L7.8 .8" fill="none" stroke="#1a80d6" stroke-width="1.5"/></svg>
<span class="t" style="left:490.30px;top:414.00px;font-size:10px;color:#4f555b;transform:scaleX(0.995);">Notes</span>
<div class="a" style="left:364.7px;top:439.6px;width:292px;height:54.7px;background:#f4f6f8;border-top:1px solid #e6eaed;"></div>
<div class="a" style="left:515.3px;top:453.6px;width:57.7px;height:27.8px;background:#1581d6;border-radius:14px;"></div>
<span class="t" style="left:536.40px;top:464.00px;font-size:10px;color:#fff;-webkit-text-stroke:.3px #fff;transform:scaleX(0.920);">OK</span>
<div class="a" style="left:583.8px;top:453.6px;width:57.7px;height:27.8px;background:#8e989f;border-radius:14px;"></div>
<span class="t" style="left:592.90px;top:464.00px;font-size:10px;color:#fff;-webkit-text-stroke:.3px #fff;transform:scaleX(0.917);">CANCEL</span>
</body></html>
